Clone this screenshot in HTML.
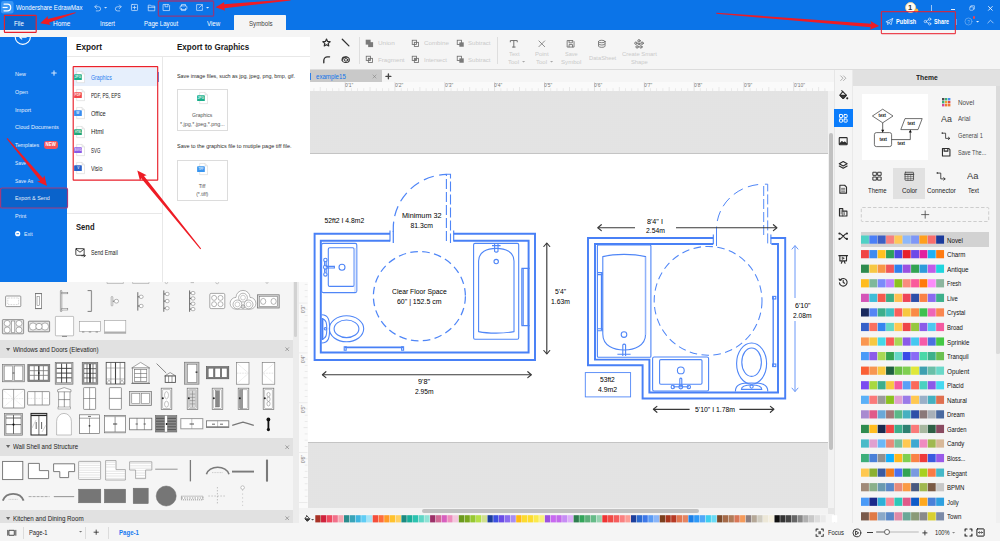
<!DOCTYPE html>
<html lang="en"><head><meta charset="utf-8"><title>Wondershare EdrawMax</title><style>
html,body{margin:0;padding:0;}
body{width:1000px;height:541px;overflow:hidden;background:#f5f5f5;position:relative;font-family:"Liberation Sans",sans-serif;}
.r{position:absolute;display:block;overflow:visible;}
.t{position:absolute;display:block;white-space:nowrap;}
svg text{font-family:"Liberation Sans",sans-serif;}
</style></head>
<body>
<!-- p1_base -->
<div class="r" style="left:0px;top:0px;width:1000.00px;height:30.00px;background:#0b74e8;"></div>
<div class="r" style="left:308px;top:69px;width:692.00px;height:1.00px;background:#dcdcdc;"></div>
<div class="r" style="left:234.4px;top:15.4px;width:52.00px;height:14.60px;background:#f5f5f5;border-radius:0.8px 0.8px 0 0;"></div>
<div class="r" style="left:308px;top:70px;width:74.00px;height:12.00px;background:#c9c9c9;"></div>
<div class="r" style="left:310px;top:72.5px;width:1.00px;height:7.50px;background:#2f7fe6;"></div>
<div class="r" style="left:299px;top:82px;width:534.70px;height:9.00px;background:#fafafa;"></div>
<div class="r" style="left:307.5px;top:91px;width:520.10px;height:416.70px;background:#e6e6e6;background-image:radial-gradient(#dadada 0.5px, transparent 0.75px);background-size:2px 2px;"></div>
<div class="r" style="left:307.5px;top:153.2px;width:520.10px;height:289.40px;background:#fff;border-top:0.8px solid #c4c4c4;border-bottom:0.8px solid #c4c4c4;box-sizing:border-box;"></div>
<div class="r" style="left:299px;top:91px;width:8.50px;height:416.70px;background:#fafafa;"></div>
<div class="r" style="left:293px;top:282px;width:6.00px;height:241.00px;background:#ececec;"></div>
<div class="r" style="left:293.6px;top:282px;width:3.80px;height:54.50px;background:#d2d2d2;border-radius:0 0 2px 2px;"></div>
<div class="r" style="left:827.6px;top:91px;width:6.30px;height:423.00px;background:#f2f2f2;"></div>
<div class="r" style="left:828.6px;top:132.5px;width:4.40px;height:317.70px;background:#c1c1c1;border-radius:2.2px;"></div>
<div class="r" style="left:827.6px;top:507.7px;width:6.30px;height:6.60px;background:#e6e6e6;"></div>
<div class="r" style="left:299px;top:507.7px;width:528.60px;height:6.60px;background:#f3f3f3;"></div>
<div class="r" style="left:421.9px;top:508.6px;width:277.10px;height:4.80px;background:#c1c1c1;border-radius:2.4px;"></div>
<div class="r" style="left:299px;top:514.3px;width:534.90px;height:8.70px;background:#f5f5f5;"></div>
<div class="r" style="left:834.3px;top:69.5px;width:18.40px;height:453.50px;background:#f5f5f5;border-left:0.8px solid #e6e6e6;border-right:0.8px solid #e9e9e9;box-sizing:border-box;"></div>
<div class="r" style="left:852.7px;top:69.5px;width:147.30px;height:453.50px;background:#f5f5f5;"></div>
<div class="r" style="left:852.7px;top:69.5px;width:147.30px;height:16.70px;background:#e1e1e1;"></div>
<div class="r" style="left:996.2px;top:86.2px;width:3.80px;height:436.80px;background:#f0f0f0;"></div>
<div class="r" style="left:996.2px;top:86.2px;width:3.80px;height:268.20px;background:#dbdbdb;border-radius:0 0 1.6px 1.6px;"></div>
<div class="r" style="left:0px;top:523px;width:1000.00px;height:18.00px;background:#f5f5f5;"></div>
<!-- p2_top -->
<svg class="r" style="left:0.8px;top:0.8px" width="12.6" height="12.6" viewBox="0 0 12.6 12.6"><rect x="0" y="0" width="12.6" height="12.6" rx="2.4" fill="#3a97f6"/><path d="M2.6 3.2H6.4A3.3 3.3 0 0 1 6.4 9.8H2.6" fill="none" stroke="#fff" stroke-width="1.2"/><path d="M1.6 6.5H6.6" stroke="#fff" stroke-width="1.2"/></svg>
<span class="t" style="left:15.50px;top:3.64px;font-size:6.4px;line-height:8.32px;color:#fff;transform:scaleX(0.946);transform-origin:left center;">Wondershare EdrawMax</span>
<svg class="r" style="left:93.10px;top:3.10px;" width="9" height="9" viewBox="0 0 10 10" fill="none" stroke="#cfe3fb" stroke-width="0.8" stroke-linecap="round" stroke-linejoin="round"><path d="M2.2 4.2H6.2A2.3 2.3 0 0 1 6.2 8.8H3.6"/><path d="M4 2.2L2 4.2L4 6.2"/></svg>
<svg class="r" style="left:103.70px;top:7.20px" width="3.2" height="1.6" viewBox="0 0 4 2"><path d="M0 0H4L2 2Z" fill="#cfe3fb"/></svg>
<svg class="r" style="left:114.30px;top:3.10px;" width="9" height="9" viewBox="0 0 10 10" fill="none" stroke="#cfe3fb" stroke-width="0.8" stroke-linecap="round" stroke-linejoin="round"><path d="M7.8 4.2H3.8A2.3 2.3 0 0 0 3.8 8.8H6.4"/><path d="M6 2.2L8 4.2L6 6.2"/></svg>
<svg class="r" style="left:130.10px;top:3.10px;" width="9" height="9" viewBox="0 0 10 10" fill="none" stroke="#d6e7fc" stroke-width="0.8" stroke-linecap="round" stroke-linejoin="round"><rect x="1.6" y="1.6" width="6.8" height="6.8" rx="0.8"/><path d="M5 3.4V6.6M3.4 5H6.6"/></svg>
<svg class="r" style="left:146.50px;top:3.10px;" width="9" height="9" viewBox="0 0 10 10" fill="none" stroke="#d6e7fc" stroke-width="0.8" stroke-linecap="round" stroke-linejoin="round"><path d="M1.4 8.2V2.4H4L4.8 3.4H8.6V8.2Z"/><path d="M1.4 4.8H8.6"/></svg>
<svg class="r" style="left:162.40px;top:3.10px;" width="9" height="9" viewBox="0 0 10 10" fill="none" stroke="#d6e7fc" stroke-width="0.8" stroke-linecap="round" stroke-linejoin="round"><path d="M1.6 1.6H7.4L8.4 2.6V8.4H1.6Z"/><path d="M3.4 1.8V4.2H6.6V1.8"/></svg>
<svg class="r" style="left:178.90px;top:3.10px;" width="9" height="9" viewBox="0 0 10 10" fill="none" stroke="#d6e7fc" stroke-width="0.8" stroke-linecap="round" stroke-linejoin="round"><rect x="1.2" y="3.2" width="7.6" height="4" rx="1.2"/><path d="M2.8 3V1.6H7.2V3M2.8 6V8.4H7.2V6"/></svg>
<svg class="r" style="left:194.80px;top:3.10px;" width="9" height="9" viewBox="0 0 10 10" fill="none" stroke="#d6e7fc" stroke-width="0.8" stroke-linecap="round" stroke-linejoin="round"><path d="M5 1.8H1.8V8.2H8.2V5.4"/><path d="M4.4 5.6L8 2M5.8 1.8H8.2V4.2"/></svg>
<svg class="r" style="left:205.60px;top:7.20px" width="3.2" height="1.6" viewBox="0 0 4 2"><path d="M0 0H4L2 2Z" fill="#e6f0fd"/></svg>
<div class="r" style="left:4.6px;top:15.4px;width:31.80px;height:14.60px;background:#0a64cc;"></div>
<span class="t" style="left:13.90px;top:20.18px;font-size:6.8px;line-height:8.84px;color:#fff;transform:scaleX(0.903);transform-origin:left center;">File</span>
<span class="t" style="left:53.10px;top:20.18px;font-size:6.8px;line-height:8.84px;color:#fff;transform:scaleX(0.954);transform-origin:left center;">Home</span>
<span class="t" style="left:100.00px;top:20.18px;font-size:6.8px;line-height:8.84px;color:#fff;transform:scaleX(0.870);transform-origin:left center;">Insert</span>
<span class="t" style="left:143.50px;top:20.18px;font-size:6.8px;line-height:8.84px;color:#fff;transform:scaleX(0.893);transform-origin:left center;">Page Layout</span>
<span class="t" style="left:206.80px;top:20.18px;font-size:6.8px;line-height:8.84px;color:#fff;transform:scaleX(0.903);transform-origin:left center;">View</span>
<span class="t" style="left:248.90px;top:20.18px;font-size:6.8px;line-height:8.84px;color:#444;transform:scaleX(0.905);transform-origin:left center;">Symbols</span>
<svg class="r" style="left:904px;top:1px" width="16" height="14" viewBox="0 0 16 14"><circle cx="6.6" cy="6.5" r="5" fill="#fffdf6" stroke="#f5d58e" stroke-width="0.9"/><circle cx="12.4" cy="9.4" r="1.9" fill="#f7b53c"/></svg>
<span class="t" style="left:908.38px;top:2.90px;font-size:8px;line-height:10.4px;color:#333;transform:scaleX(0.950);transform-origin:center center;font-weight:bold;">1</span>
<div class="r" style="left:931.4px;top:4.6px;width:0.80px;height:6.00px;background:#9cc6f6;"></div>
<div class="r" style="left:950.6px;top:8.6px;width:4.00px;height:0.90px;background:#e6f0fd;"></div>
<svg class="r" style="left:968.20px;top:3.80px;" width="8" height="8" viewBox="0 0 10 10" fill="none" stroke="#d6e7fc" stroke-width="0.8" stroke-linecap="round" stroke-linejoin="round"><rect x="2.2" y="3.6" width="4.4" height="4.2" rx="0.6"/><path d="M3.6 3.4V2.2H8V6.4H6.8"/></svg>
<svg class="r" style="left:986.60px;top:4.50px;" width="6.8" height="6.8" viewBox="0 0 10 10" fill="none" stroke="#eef5fe" stroke-width="1.3" stroke-linecap="round" stroke-linejoin="round"><path d="M2.2 2.2L7.8 7.8M7.8 2.2L2.2 7.8"/></svg>
<svg class="r" style="left:884.90px;top:16.80px;" width="9" height="9" viewBox="0 0 10 10" fill="none" stroke="#d6e7fc" stroke-width="0.8" stroke-linecap="round" stroke-linejoin="round"><path d="M1.4 5.2L8.6 1.6L6.8 8.6L4.8 6.4Z"/><path d="M4.8 6.4L8.6 1.6M3 5.8V8.6L4.6 7"/></svg>
<span class="t" style="left:896.00px;top:17.71px;font-size:6.6px;line-height:8.58px;color:#fff;transform:scaleX(0.847);transform-origin:left center;font-weight:bold;">Publish</span>
<svg class="r" style="left:922.50px;top:16.80px;" width="9" height="9" viewBox="0 0 10 10" fill="none" stroke="#d6e7fc" stroke-width="0.8" stroke-linecap="round" stroke-linejoin="round"><circle cx="2.6" cy="5" r="1.3"/><circle cx="7.4" cy="2.4" r="1.3"/><circle cx="7.4" cy="7.6" r="1.3"/><path d="M3.8 4.4L6.2 3M3.8 5.6L6.2 7"/></svg>
<span class="t" style="left:933.60px;top:17.71px;font-size:6.6px;line-height:8.58px;color:#fff;transform:scaleX(0.818);transform-origin:left center;font-weight:bold;">Share</span>
<div class="r" style="left:956.2px;top:19.4px;width:0.80px;height:5.80px;background:#5ea3f1;"></div>
<svg class="r" style="left:964.10px;top:17.00px;" width="9" height="9" viewBox="0 0 10 10" fill="none" stroke="#7fb5f3" stroke-width="0.7" stroke-linecap="round" stroke-linejoin="round"><circle cx="5" cy="5" r="3.9"/></svg>
<span class="t" style="left:967.10px;top:18.69px;font-size:5.4px;line-height:7.02px;color:#7fb5f3;transform:scaleX(0.860);transform-origin:center center;">?</span>
<div class="r" style="left:972.6px;top:16.4px;width:2.6px;height:2.6px;border-radius:50%;background:#f0444f"></div>
<svg class="r" style="left:976.10px;top:20.80px" width="3.2" height="1.6" viewBox="0 0 4 2"><path d="M0 0H4L2 2Z" fill="#e6f0fd"/></svg>
<svg class="r" style="left:985.70px;top:16.90px;" width="9" height="9" viewBox="0 0 10 10" fill="none" stroke="#cfe3fb" stroke-width="0.8" stroke-linecap="round" stroke-linejoin="round"><path d="M2 6.6L5 3.6L8 6.6"/></svg>
<svg class="r" style="left:321.90px;top:38.10px;" width="9" height="9" viewBox="0 0 10 10" fill="none" stroke="#303030" stroke-width="1.35" stroke-linecap="round" stroke-linejoin="round"><path d="M5 1.2L6.2 3.8L9 4.1L6.9 6L7.5 8.8L5 7.4L2.5 8.8L3.1 6L1 4.1L3.8 3.8Z"/></svg>
<svg class="r" style="left:341.20px;top:38.40px;" width="9.2" height="9.2" viewBox="0 0 10 10" fill="none" stroke="#303030" stroke-width="1.4" stroke-linecap="round" stroke-linejoin="round"><path d="M1.4 1.4L8.6 8.6"/></svg>
<svg class="r" style="left:321.90px;top:55.10px;" width="9" height="9" viewBox="0 0 10 10" fill="none" stroke="#303030" stroke-width="1.5" stroke-linecap="round" stroke-linejoin="round"><path d="M2 8.6V6A4 4 0 0 1 6 2H8.4"/></svg>
<svg class="r" style="left:340.90px;top:54.90px;" width="9.4" height="9.4" viewBox="0 0 10 10" fill="none" stroke="#303030" stroke-width="1.0" stroke-linecap="round" stroke-linejoin="round"><ellipse cx="5" cy="5" rx="3.9" ry="3" stroke-width="1.1"/><ellipse cx="5.3" cy="5.2" rx="2" ry="1.4" stroke-width="1.0"/><path d="M1.2 5.6Q1.6 2.2 5.6 2" stroke-width="1.0"/></svg>
<div class="r" style="left:359.2px;top:37px;width:0.80px;height:26.60px;background:#dedede;"></div>
<svg class="r" style="left:365.20px;top:38.60px;stroke-linejoin:miter;" width="8.8" height="8.8" viewBox="0 0 10 10" fill="none" stroke="#6e6e6e" stroke-width="0.95" stroke-linecap="round" stroke-linejoin="round"><rect x="0.8" y="0.8" width="5.6" height="5.6" fill="#7a7a7a" stroke="none"/><rect x="3.6" y="3.6" width="5.6" height="5.6" fill="#7a7a7a" stroke="none"/></svg>
<span class="t" style="left:378.00px;top:39.14px;font-size:6.1px;line-height:7.93px;color:#cacaca;transform:scaleX(1.048);transform-origin:left center;">Union</span>
<svg class="r" style="left:365.20px;top:55.20px;stroke-linejoin:miter;" width="8.8" height="8.8" viewBox="0 0 10 10" fill="none" stroke="#6e6e6e" stroke-width="0.95" stroke-linecap="round" stroke-linejoin="round"><rect x="1.4" y="1.4" width="4.8" height="4.8"/><rect x="3.8" y="3.8" width="4.8" height="4.8"/><path d="M3.8 6.2L6.2 3.8"/></svg>
<span class="t" style="left:378.00px;top:55.94px;font-size:6.1px;line-height:7.93px;color:#cacaca;transform:scaleX(1.019);transform-origin:left center;">Fragment</span>
<svg class="r" style="left:410.80px;top:38.60px;stroke-linejoin:miter;" width="8.8" height="8.8" viewBox="0 0 10 10" fill="none" stroke="#6e6e6e" stroke-width="0.95" stroke-linecap="round" stroke-linejoin="round"><rect x="1.4" y="1.4" width="4.8" height="4.8"/><rect x="3.8" y="3.8" width="4.8" height="4.8"/></svg>
<span class="t" style="left:424.00px;top:39.14px;font-size:6.1px;line-height:7.93px;color:#cacaca;transform:scaleX(1.020);transform-origin:left center;">Combine</span>
<svg class="r" style="left:410.80px;top:55.20px;stroke-linejoin:miter;" width="8.8" height="8.8" viewBox="0 0 10 10" fill="none" stroke="#6e6e6e" stroke-width="0.95" stroke-linecap="round" stroke-linejoin="round"><rect x="1.4" y="1.4" width="4.8" height="4.8"/><rect x="3.8" y="3.8" width="4.8" height="4.8"/><rect x="3.8" y="3.8" width="2.4" height="2.4" fill="#7a7a7a" stroke="none"/></svg>
<span class="t" style="left:424.00px;top:55.94px;font-size:6.1px;line-height:7.93px;color:#cacaca;transform:scaleX(0.975);transform-origin:left center;">Intersect</span>
<svg class="r" style="left:455.80px;top:38.60px;stroke-linejoin:miter;" width="8.8" height="8.8" viewBox="0 0 10 10" fill="none" stroke="#6e6e6e" stroke-width="0.95" stroke-linecap="round" stroke-linejoin="round"><rect x="1.4" y="1.4" width="4.8" height="4.8"/><rect x="3.8" y="3.8" width="5" height="5" fill="#7a7a7a" stroke="none"/></svg>
<span class="t" style="left:468.00px;top:39.14px;font-size:6.1px;line-height:7.93px;color:#cacaca;transform:scaleX(0.990);transform-origin:left center;">Subtract</span>
<svg class="r" style="left:455.80px;top:55.20px;stroke-linejoin:miter;" width="8.8" height="8.8" viewBox="0 0 10 10" fill="none" stroke="#6e6e6e" stroke-width="0.95" stroke-linecap="round" stroke-linejoin="round"><rect x="1.4" y="1.4" width="4.8" height="4.8"/><rect x="3.8" y="3.8" width="5" height="5" fill="#7a7a7a" stroke="none"/></svg>
<span class="t" style="left:468.00px;top:55.94px;font-size:6.1px;line-height:7.93px;color:#cacaca;transform:scaleX(0.990);transform-origin:left center;">Subtract</span>
<div class="r" style="left:497.2px;top:37px;width:0.80px;height:26.60px;background:#dedede;"></div>
<svg class="r" style="left:508.80px;top:39.20px;" width="9.6" height="9.6" viewBox="0 0 10 10" fill="none" stroke="#6e6e6e" stroke-width="1.0" stroke-linecap="round" stroke-linejoin="round"><path d="M1.4 3V1.6H8.6V3M5 1.6V8.4M3.6 8.4H6.4"/></svg>
<span class="t" style="left:509.00px;top:50.33px;font-size:6.1px;line-height:7.93px;color:#cacaca;transform:scaleX(0.948);transform-origin:left center;">Text</span>
<span class="t" style="left:508.40px;top:58.14px;font-size:6.1px;line-height:7.93px;color:#cacaca;transform:scaleX(0.983);transform-origin:left center;">Tool</span>
<svg class="r" style="left:521.80px;top:61.00px" width="3.2" height="1.6" viewBox="0 0 4 2"><path d="M0 0H4L2 2Z" fill="#a8a8a8"/></svg>
<svg class="r" style="left:536.80px;top:39.40px;" width="9.6" height="9.6" viewBox="0 0 10 10" fill="none" stroke="#6e6e6e" stroke-width="0.8" stroke-linecap="round" stroke-linejoin="round"><path d="M2 2L8 8M8 2L2 8"/></svg>
<span class="t" style="left:535.00px;top:50.33px;font-size:6.1px;line-height:7.93px;color:#cacaca;transform:scaleX(0.978);transform-origin:left center;">Point</span>
<span class="t" style="left:536.20px;top:58.14px;font-size:6.1px;line-height:7.93px;color:#cacaca;transform:scaleX(0.983);transform-origin:left center;">Tool</span>
<svg class="r" style="left:550.40px;top:61.00px" width="3.2" height="1.6" viewBox="0 0 4 2"><path d="M0 0H4L2 2Z" fill="#a8a8a8"/></svg>
<svg class="r" style="left:566.00px;top:39.20px;" width="9.6" height="9.6" viewBox="0 0 10 10" fill="none" stroke="#6e6e6e" stroke-width="0.9" stroke-linecap="round" stroke-linejoin="round"><path d="M1.6 1.6H7.2L8.4 2.8V8.4H1.6Z"/><path d="M3.2 1.8V4H6.6V1.8M3.2 8.2V5.8H6.8V8.2"/></svg>
<span class="t" style="left:564.80px;top:50.33px;font-size:6.1px;line-height:7.93px;color:#cacaca;transform:scaleX(0.906);transform-origin:left center;">Save</span>
<span class="t" style="left:560.80px;top:58.14px;font-size:6.1px;line-height:7.93px;color:#cacaca;transform:scaleX(1.003);transform-origin:left center;">Symbol</span>
<svg class="r" style="left:597.40px;top:39.20px;" width="9.6" height="9.6" viewBox="0 0 10 10" fill="none" stroke="#6e6e6e" stroke-width="0.9" stroke-linecap="round" stroke-linejoin="round"><ellipse cx="5" cy="2.6" rx="3.4" ry="1.3"/><path d="M1.6 2.6V7.4A3.4 1.3 0 0 0 8.4 7.4V2.6M1.6 5A3.4 1.3 0 0 0 8.4 5"/></svg>
<span class="t" style="left:589.40px;top:53.53px;font-size:6.1px;line-height:7.93px;color:#cacaca;transform:scaleX(0.944);transform-origin:left center;">DataSheet</span>
<svg class="r" style="left:634.40px;top:39.00px;" width="10" height="10" viewBox="0 0 10 10" fill="none" stroke="#666" stroke-width="0.9" stroke-linecap="round" stroke-linejoin="round"><circle cx="5" cy="1.8" r="1.2"/><circle cx="1.9" cy="4.2" r="1.2"/><circle cx="8.1" cy="4.2" r="1.2"/><circle cx="3.1" cy="7.9" r="1.2"/><circle cx="6.9" cy="7.9" r="1.2"/><circle cx="5" cy="5" r="0.9"/></svg>
<span class="t" style="left:622.20px;top:50.33px;font-size:6.1px;line-height:7.93px;color:#cacaca;transform:scaleX(0.965);transform-origin:left center;">Create Smart</span>
<span class="t" style="left:631.40px;top:58.14px;font-size:6.1px;line-height:7.93px;color:#cacaca;transform:scaleX(0.952);transform-origin:left center;">Shape</span>
<span class="t" style="left:316.00px;top:72.91px;font-size:6.6px;line-height:8.58px;color:#0f73ea;transform:scaleX(0.923);transform-origin:left center;">example15</span>
<svg class="r" style="left:371.10px;top:73.10px;" width="7" height="7" viewBox="0 0 10 10" fill="none" stroke="#777" stroke-width="0.7" stroke-linecap="round" stroke-linejoin="round"><path d="M2.8 2.8L7.2 7.2M7.2 2.8L2.8 7.2"/></svg>
<svg class="r" style="left:384.60px;top:72.90px;" width="6.8" height="6.8" viewBox="0 0 10 10" fill="none" stroke="#444" stroke-width="2.0" stroke-linecap="round" stroke-linejoin="round"><path d="M5 1.4V8.6M1.4 5H8.6"/></svg>
<svg class="r" style="left:0;top:0" width="1000" height="541" viewBox="0 0 1000 541"><rect x="313.54" y="88.2" width="0.8" height="2.8" fill="#e6e6e6"/><rect x="319.78" y="87" width="0.8" height="4" fill="#e2e2e2"/><rect x="326.01" y="88.2" width="0.8" height="2.8" fill="#e6e6e6"/><rect x="332.24" y="88.2" width="0.8" height="2.8" fill="#e6e6e6"/><rect x="338.47" y="88.2" width="0.8" height="2.8" fill="#e6e6e6"/><rect x="344.70" y="82" width="0.8" height="9" fill="#dcdcdc"/><rect x="350.93" y="88.2" width="0.8" height="2.8" fill="#e6e6e6"/><rect x="357.16" y="88.2" width="0.8" height="2.8" fill="#e6e6e6"/><rect x="363.39" y="88.2" width="0.8" height="2.8" fill="#e6e6e6"/><rect x="369.62" y="87" width="0.8" height="4" fill="#e2e2e2"/><rect x="375.86" y="88.2" width="0.8" height="2.8" fill="#e6e6e6"/><rect x="382.09" y="88.2" width="0.8" height="2.8" fill="#e6e6e6"/><rect x="388.32" y="88.2" width="0.8" height="2.8" fill="#e6e6e6"/><rect x="394.55" y="82" width="0.8" height="9" fill="#dcdcdc"/><rect x="400.78" y="88.2" width="0.8" height="2.8" fill="#e6e6e6"/><rect x="407.01" y="88.2" width="0.8" height="2.8" fill="#e6e6e6"/><rect x="413.24" y="88.2" width="0.8" height="2.8" fill="#e6e6e6"/><rect x="419.48" y="87" width="0.8" height="4" fill="#e2e2e2"/><rect x="425.71" y="88.2" width="0.8" height="2.8" fill="#e6e6e6"/><rect x="431.94" y="88.2" width="0.8" height="2.8" fill="#e6e6e6"/><rect x="438.17" y="88.2" width="0.8" height="2.8" fill="#e6e6e6"/><rect x="444.40" y="82" width="0.8" height="9" fill="#dcdcdc"/><rect x="450.63" y="88.2" width="0.8" height="2.8" fill="#e6e6e6"/><rect x="456.86" y="88.2" width="0.8" height="2.8" fill="#e6e6e6"/><rect x="463.09" y="88.2" width="0.8" height="2.8" fill="#e6e6e6"/><rect x="469.33" y="87" width="0.8" height="4" fill="#e2e2e2"/><rect x="475.56" y="88.2" width="0.8" height="2.8" fill="#e6e6e6"/><rect x="481.79" y="88.2" width="0.8" height="2.8" fill="#e6e6e6"/><rect x="488.02" y="88.2" width="0.8" height="2.8" fill="#e6e6e6"/><rect x="494.25" y="82" width="0.8" height="9" fill="#dcdcdc"/><rect x="500.48" y="88.2" width="0.8" height="2.8" fill="#e6e6e6"/><rect x="506.71" y="88.2" width="0.8" height="2.8" fill="#e6e6e6"/><rect x="512.94" y="88.2" width="0.8" height="2.8" fill="#e6e6e6"/><rect x="519.18" y="87" width="0.8" height="4" fill="#e2e2e2"/><rect x="525.41" y="88.2" width="0.8" height="2.8" fill="#e6e6e6"/><rect x="531.64" y="88.2" width="0.8" height="2.8" fill="#e6e6e6"/><rect x="537.87" y="88.2" width="0.8" height="2.8" fill="#e6e6e6"/><rect x="544.10" y="82" width="0.8" height="9" fill="#dcdcdc"/><rect x="550.33" y="88.2" width="0.8" height="2.8" fill="#e6e6e6"/><rect x="556.56" y="88.2" width="0.8" height="2.8" fill="#e6e6e6"/><rect x="562.79" y="88.2" width="0.8" height="2.8" fill="#e6e6e6"/><rect x="569.02" y="87" width="0.8" height="4" fill="#e2e2e2"/><rect x="575.26" y="88.2" width="0.8" height="2.8" fill="#e6e6e6"/><rect x="581.49" y="88.2" width="0.8" height="2.8" fill="#e6e6e6"/><rect x="587.72" y="88.2" width="0.8" height="2.8" fill="#e6e6e6"/><rect x="593.95" y="82" width="0.8" height="9" fill="#dcdcdc"/><rect x="600.18" y="88.2" width="0.8" height="2.8" fill="#e6e6e6"/><rect x="606.41" y="88.2" width="0.8" height="2.8" fill="#e6e6e6"/><rect x="612.64" y="88.2" width="0.8" height="2.8" fill="#e6e6e6"/><rect x="618.88" y="87" width="0.8" height="4" fill="#e2e2e2"/><rect x="625.11" y="88.2" width="0.8" height="2.8" fill="#e6e6e6"/><rect x="631.34" y="88.2" width="0.8" height="2.8" fill="#e6e6e6"/><rect x="637.57" y="88.2" width="0.8" height="2.8" fill="#e6e6e6"/><rect x="643.80" y="82" width="0.8" height="9" fill="#dcdcdc"/><rect x="650.03" y="88.2" width="0.8" height="2.8" fill="#e6e6e6"/><rect x="656.26" y="88.2" width="0.8" height="2.8" fill="#e6e6e6"/><rect x="662.49" y="88.2" width="0.8" height="2.8" fill="#e6e6e6"/><rect x="668.73" y="87" width="0.8" height="4" fill="#e2e2e2"/><rect x="674.96" y="88.2" width="0.8" height="2.8" fill="#e6e6e6"/><rect x="681.19" y="88.2" width="0.8" height="2.8" fill="#e6e6e6"/><rect x="687.42" y="88.2" width="0.8" height="2.8" fill="#e6e6e6"/><rect x="693.65" y="82" width="0.8" height="9" fill="#dcdcdc"/><rect x="699.88" y="88.2" width="0.8" height="2.8" fill="#e6e6e6"/><rect x="706.11" y="88.2" width="0.8" height="2.8" fill="#e6e6e6"/><rect x="712.34" y="88.2" width="0.8" height="2.8" fill="#e6e6e6"/><rect x="718.58" y="87" width="0.8" height="4" fill="#e2e2e2"/><rect x="724.81" y="88.2" width="0.8" height="2.8" fill="#e6e6e6"/><rect x="731.04" y="88.2" width="0.8" height="2.8" fill="#e6e6e6"/><rect x="737.27" y="88.2" width="0.8" height="2.8" fill="#e6e6e6"/><rect x="743.50" y="82" width="0.8" height="9" fill="#dcdcdc"/><rect x="749.73" y="88.2" width="0.8" height="2.8" fill="#e6e6e6"/><rect x="755.96" y="88.2" width="0.8" height="2.8" fill="#e6e6e6"/><rect x="762.19" y="88.2" width="0.8" height="2.8" fill="#e6e6e6"/><rect x="768.43" y="87" width="0.8" height="4" fill="#e2e2e2"/><rect x="774.66" y="88.2" width="0.8" height="2.8" fill="#e6e6e6"/><rect x="780.89" y="88.2" width="0.8" height="2.8" fill="#e6e6e6"/><rect x="787.12" y="88.2" width="0.8" height="2.8" fill="#e6e6e6"/><rect x="793.35" y="82" width="0.8" height="9" fill="#dcdcdc"/><rect x="799.58" y="88.2" width="0.8" height="2.8" fill="#e6e6e6"/><rect x="805.81" y="88.2" width="0.8" height="2.8" fill="#e6e6e6"/><rect x="812.04" y="88.2" width="0.8" height="2.8" fill="#e6e6e6"/><rect x="818.28" y="87" width="0.8" height="4" fill="#e2e2e2"/><rect x="824.51" y="88.2" width="0.8" height="2.8" fill="#e6e6e6"/><rect x="304.7" y="283.96" width="2.8" height="0.8" fill="#e6e6e6"/><rect x="304.7" y="290.19" width="2.8" height="0.8" fill="#e6e6e6"/><rect x="304.7" y="296.42" width="2.8" height="0.8" fill="#e6e6e6"/><rect x="299" y="302.65" width="8.5" height="0.8" fill="#e8e8e8"/><rect x="304.7" y="308.88" width="2.8" height="0.8" fill="#e6e6e6"/><rect x="304.7" y="315.11" width="2.8" height="0.8" fill="#e6e6e6"/><rect x="304.7" y="321.34" width="2.8" height="0.8" fill="#e6e6e6"/><rect x="303.5" y="327.58" width="4" height="0.8" fill="#e2e2e2"/><rect x="304.7" y="333.81" width="2.8" height="0.8" fill="#e6e6e6"/><rect x="304.7" y="340.04" width="2.8" height="0.8" fill="#e6e6e6"/><rect x="304.7" y="346.27" width="2.8" height="0.8" fill="#e6e6e6"/><rect x="299" y="352.50" width="8.5" height="0.8" fill="#e8e8e8"/><rect x="304.7" y="358.73" width="2.8" height="0.8" fill="#e6e6e6"/><rect x="304.7" y="364.96" width="2.8" height="0.8" fill="#e6e6e6"/><rect x="304.7" y="371.19" width="2.8" height="0.8" fill="#e6e6e6"/><rect x="303.5" y="377.43" width="4" height="0.8" fill="#e2e2e2"/><rect x="304.7" y="383.66" width="2.8" height="0.8" fill="#e6e6e6"/><rect x="304.7" y="389.89" width="2.8" height="0.8" fill="#e6e6e6"/><rect x="304.7" y="396.12" width="2.8" height="0.8" fill="#e6e6e6"/><rect x="299" y="402.35" width="8.5" height="0.8" fill="#e8e8e8"/><rect x="304.7" y="408.58" width="2.8" height="0.8" fill="#e6e6e6"/><rect x="304.7" y="414.81" width="2.8" height="0.8" fill="#e6e6e6"/><rect x="304.7" y="421.04" width="2.8" height="0.8" fill="#e6e6e6"/><rect x="303.5" y="427.28" width="4" height="0.8" fill="#e2e2e2"/><rect x="304.7" y="433.51" width="2.8" height="0.8" fill="#e6e6e6"/><rect x="304.7" y="439.74" width="2.8" height="0.8" fill="#e6e6e6"/><rect x="304.7" y="445.97" width="2.8" height="0.8" fill="#e6e6e6"/><rect x="299" y="452.20" width="8.5" height="0.8" fill="#e8e8e8"/><rect x="304.7" y="458.43" width="2.8" height="0.8" fill="#e6e6e6"/><rect x="304.7" y="464.66" width="2.8" height="0.8" fill="#e6e6e6"/><rect x="304.7" y="470.89" width="2.8" height="0.8" fill="#e6e6e6"/><rect x="303.5" y="477.13" width="4" height="0.8" fill="#e2e2e2"/><rect x="304.7" y="483.36" width="2.8" height="0.8" fill="#e6e6e6"/><rect x="304.7" y="489.59" width="2.8" height="0.8" fill="#e6e6e6"/><rect x="304.7" y="495.82" width="2.8" height="0.8" fill="#e6e6e6"/><rect x="299" y="502.05" width="8.5" height="0.8" fill="#e8e8e8"/></svg>
<span class="t" style="left:344.90px;top:82.42px;font-size:5.2px;line-height:6.76px;color:#777;transform:scaleX(0.950);transform-origin:left center;">0'1"</span>
<span class="t" style="left:394.75px;top:82.42px;font-size:5.2px;line-height:6.76px;color:#777;transform:scaleX(0.950);transform-origin:left center;">0'2"</span>
<span class="t" style="left:444.60px;top:82.42px;font-size:5.2px;line-height:6.76px;color:#777;transform:scaleX(0.950);transform-origin:left center;">0'3"</span>
<span class="t" style="left:494.45px;top:82.42px;font-size:5.2px;line-height:6.76px;color:#777;transform:scaleX(0.950);transform-origin:left center;">0'4"</span>
<span class="t" style="left:544.30px;top:82.42px;font-size:5.2px;line-height:6.76px;color:#777;transform:scaleX(0.950);transform-origin:left center;">0'5"</span>
<span class="t" style="left:594.15px;top:82.42px;font-size:5.2px;line-height:6.76px;color:#777;transform:scaleX(0.950);transform-origin:left center;">0'6"</span>
<span class="t" style="left:644.00px;top:82.42px;font-size:5.2px;line-height:6.76px;color:#777;transform:scaleX(0.950);transform-origin:left center;">0'7"</span>
<span class="t" style="left:693.85px;top:82.42px;font-size:5.2px;line-height:6.76px;color:#777;transform:scaleX(0.950);transform-origin:left center;">0'8"</span>
<span class="t" style="left:743.70px;top:82.42px;font-size:5.2px;line-height:6.76px;color:#777;transform:scaleX(0.950);transform-origin:left center;">0'9"</span>
<span class="t" style="left:793.55px;top:82.42px;font-size:5.2px;line-height:6.76px;color:#777;transform:scaleX(0.950);transform-origin:left center;">0'10"</span>
<span class="t" style="left:292.60px;top:306.45px;width:20px;height:6px;line-height:6px;text-align:center;font-size:5.2px;color:#777;transform:rotate(-90deg);">0'3"</span>
<span class="t" style="left:292.60px;top:356.30px;width:20px;height:6px;line-height:6px;text-align:center;font-size:5.2px;color:#777;transform:rotate(-90deg);">0'4"</span>
<span class="t" style="left:292.60px;top:406.15px;width:20px;height:6px;line-height:6px;text-align:center;font-size:5.2px;color:#777;transform:rotate(-90deg);">0'5"</span>
<span class="t" style="left:292.60px;top:456.00px;width:20px;height:6px;line-height:6px;text-align:center;font-size:5.2px;color:#777;transform:rotate(-90deg);">0'6"</span>
<!-- p3_plan -->
<svg class="r" style="left:0px;top:0px;" width="1000" height="541" viewBox="0 0 1000 541"><path fill="none" stroke="#4880f6" stroke-width="1.95" stroke-linejoin="miter" d="M390 233.7H314.6V359.9H535V233.7H453.7"/><path fill="none" stroke="#4880f6" stroke-width="1.95" stroke-linejoin="miter" d="M390 240.7H320.8V352.5H528.6V240.7H453.7"/><path fill="none" stroke="#4880f6" stroke-width="1.1" d="M390 230.6V241.4M453.7 230.6V241.4"/><path fill="none" stroke="#4f86f7" stroke-width="1.25" d="M393.3 243V231"/><path fill="none" stroke="#4f86f7" stroke-width="1.25" stroke-dasharray="10.5 5.5" d="M393.3 232V228A55 53.6 0 0 1 446.3 174.4"/><path fill="none" stroke="#4f86f7" stroke-width="1.1" stroke-dasharray="10 3" d="M446.4 241V174.3H450.5V243"/><rect fill="none" stroke="#4f86f7" stroke-width="1.1" x="321.6" y="243.4" width="35.2" height="49.2" rx="1.6"/><rect fill="none" stroke="#4f86f7" stroke-width="1.1" x="328.3" y="247.8" width="25.8" height="38.6" rx="1.4"/><rect x="354" y="248" width="2.6" height="44" fill="#b8cdfb" opacity="0.5"/><circle fill="none" stroke="#4f86f7" stroke-width="1.1" cx="342" cy="267.2" r="3"/><path fill="none" stroke="#4f86f7" stroke-width="1.1" d="M325.6 266.4H334.4V268H325.6"/><circle fill="none" stroke="#4f86f7" stroke-width="1.1" cx="325.4" cy="260" r="1.7" fill="#fff"/><circle fill="none" stroke="#4f86f7" stroke-width="1.1" cx="325.4" cy="267.2" r="1.9" fill="#fff"/><circle fill="none" stroke="#4f86f7" stroke-width="1.1" cx="325.4" cy="274.4" r="1.7" fill="#fff"/><path fill="none" stroke="#4f86f7" stroke-width="1.1" d="M324.6 261.6V265.4M326.2 261.6V265.4M324.6 269V272.8M326.2 269V272.8"/><ellipse fill="none" stroke="#4f86f7" stroke-width="1.1" cx="346.5" cy="328.8" rx="17.2" ry="13"/><ellipse fill="none" stroke="#4f86f7" stroke-width="1.1" cx="346.5" cy="328.8" rx="12.4" ry="8.8"/><path fill="none" stroke="#4f86f7" stroke-width="1.1" d="M321.6 314.8C329 314.8 329.6 321 329.6 328.8C329.6 337 329 343 321.6 343"/><path d="M322.6 318V340" stroke="#4880f6" stroke-width="1.6"/><path fill="none" stroke="#4f86f7" stroke-width="1.1" d="M321.6 319C326.6 319 326.8 324 326.8 328.8C326.8 334 326.6 338.8 321.6 338.8"/><circle fill="none" stroke="#4f86f7" stroke-width="1.1" cx="325.4" cy="328.8" r="1.2"/><ellipse fill="none" stroke="#4f86f7" stroke-width="1.25" stroke-dasharray="7.6 4.4" cx="419.4" cy="296.2" rx="46" ry="44.6"/><path fill="none" stroke="#4880f6" stroke-width="1.8" d="M344.6 347.3H403.4"/><rect fill="none" stroke="#4f86f7" stroke-width="1.1" x="344.2" y="346.8" width="2" height="3.4"/><rect fill="none" stroke="#4f86f7" stroke-width="1.1" x="401.6" y="346.8" width="2" height="3.4"/><rect fill="none" stroke="#4f86f7" stroke-width="1.1" x="473.6" y="243.4" width="45.1" height="95.8" rx="1.4"/><path fill="none" stroke="#4f86f7" stroke-width="1.1" d="M478.6 331.6V261C478.6 252 487 248.4 496.2 248.4C505.6 248.4 514 252 514 261V331.6C504 333.6 488 333.6 478.6 331.6Z"/><path fill="none" stroke="#4f86f7" stroke-width="1.1" d="M494.6 244V251.4C495.4 252.4 497.2 252.4 498 251.4V244M492 245.6H500.6"/><circle fill="none" stroke="#4f86f7" stroke-width="1.1" cx="496.2" cy="261.6" r="2.2"/><path fill="none" stroke="#4880f6" stroke-width="1.4" d="M528.4 268V326"/><path fill="none" stroke="#4f86f7" stroke-width="1.1" d="M521.4 268.4H529.6M521.4 325.6H529.6M521.8 268.4V325.6M523.2 268.4V325.6"/><path d="M546.8 243L546.8 354" stroke="#383838" stroke-width="1.15" fill="none"/><path d="M549.77 246.50L546.80 243.00L543.82 246.50" fill="none" stroke="#383838" stroke-width="1.15" stroke-linecap="round" stroke-linejoin="round"/><path d="M543.82 350.50L546.80 354.00L549.77 350.50" fill="none" stroke="#383838" stroke-width="1.15" stroke-linecap="round" stroke-linejoin="round"/><path d="M322.4 374.7L531.3 374.7" stroke="#383838" stroke-width="1.15" fill="none"/><path d="M325.90 371.72L322.40 374.70L325.90 377.68" fill="none" stroke="#383838" stroke-width="1.15" stroke-linecap="round" stroke-linejoin="round"/><path d="M527.80 377.68L531.30 374.70L527.80 371.72" fill="none" stroke="#383838" stroke-width="1.15" stroke-linecap="round" stroke-linejoin="round"/><path fill="none" stroke="#4880f6" stroke-width="1.95" stroke-linejoin="miter" d="M713.3 238H588V365.2H642.6V398.5H785.2V238H770.7"/><path fill="none" stroke="#4880f6" stroke-width="1.95" stroke-linejoin="miter" d="M713.3 243.9H595V359.6H649.4V392.4H778V243.9H771.4"/><path fill="none" stroke="#4880f6" stroke-width="1.1" d="M713.3 234.6V244M770.9 234.6V244"/><path fill="none" stroke="#4f86f7" stroke-width="1.0" d="M716.5 246V236"/><path fill="none" stroke="#4f86f7" stroke-width="1.0" stroke-dasharray="10.5 5.5" d="M716.5 237V229A47.3 45 0 0 1 763.6 184.2"/><path fill="none" stroke="#4f86f7" stroke-width="0.95" stroke-dasharray="10 3" d="M763.7 235V184.2H767.7V246"/><rect fill="none" stroke="#4f86f7" stroke-width="1.1" x="597.4" y="245" width="53.5" height="112.2" rx="1"/><path fill="none" stroke="#4f86f7" stroke-width="1.1" d="M602.8 256.6C615 253.6 633 253.6 645.6 256.6V334C645.6 346 634 350 624.2 350C614 350 602.8 346 602.8 334Z"/><rect x="644.4" y="257" width="1.8" height="78" fill="#b8cdfb" opacity="0.6"/><circle fill="none" stroke="#4f86f7" stroke-width="1.1" cx="624" cy="334.6" r="2.8"/><path fill="none" stroke="#4f86f7" stroke-width="1.1" d="M622.8 356V345C623.4 343.8 625 343.8 625.6 345V356M617.4 354.2H630.6"/><path fill="none" stroke="#4880f6" stroke-width="1.5" d="M601.6 273.2V330"/><path fill="none" stroke="#4f86f7" stroke-width="1.1" d="M597.8 272.6H602.2V274.6H597.8M597.8 328.8H602.2V330.8H597.8"/><ellipse fill="none" stroke="#4f86f7" stroke-width="1.05" stroke-dasharray="7.6 4.4" cx="708.1" cy="300.8" rx="53.9" ry="54.4"/><rect fill="none" stroke="#4f86f7" stroke-width="1.1" x="652.6" y="357" width="56" height="34" rx="1.6"/><rect fill="none" stroke="#4f86f7" stroke-width="1.1" x="659.6" y="359.6" width="42.4" height="24.6" rx="1.2"/><circle fill="none" stroke="#4f86f7" stroke-width="1.1" cx="680.8" cy="370.4" r="3.4"/><path fill="none" stroke="#4f86f7" stroke-width="1.1" d="M679.8 386.4V379C680.2 377.8 681.4 377.8 681.8 379V386.4"/><path fill="none" stroke="#4f86f7" stroke-width="1.1" d="M673 386.8H689"/><circle fill="none" stroke="#4f86f7" stroke-width="1.1" cx="672.8" cy="387" r="1.7" fill="#fff"/><circle fill="none" stroke="#4f86f7" stroke-width="1.1" cx="680.8" cy="387" r="1.9" fill="#fff"/><circle fill="none" stroke="#4f86f7" stroke-width="1.1" cx="688.8" cy="387" r="1.7" fill="#fff"/><ellipse fill="none" stroke="#4f86f7" stroke-width="1.1" cx="751.6" cy="363.6" rx="15" ry="20.6"/><ellipse fill="none" stroke="#4f86f7" stroke-width="1.1" cx="751.6" cy="362.2" rx="9.8" ry="14.2"/><path fill="none" stroke="#4f86f7" stroke-width="1.1" d="M735.4 391.4C735.4 384 741 383 751.6 383C762 383 767.8 384 767.8 391.4"/><path fill="none" stroke="#4f86f7" stroke-width="1.1" d="M741.4 389.4C741.4 385.6 746 385 751.6 385C757 385 761.8 385.6 761.8 389.4Z"/><circle fill="none" stroke="#4f86f7" stroke-width="1.1" cx="751.6" cy="386.6" r="1.6" fill="#fff"/><path fill="none" stroke="#4880f6" stroke-width="1.3" d="M773.2 296.8V366"/><rect fill="none" stroke="#4f86f7" stroke-width="1.1" x="772.6" y="296.4" width="3.2" height="2.6"/><rect fill="none" stroke="#4f86f7" stroke-width="1.1" x="772.6" y="364" width="3.2" height="2.6"/><rect fill="none" stroke="#4f86f7" stroke-width="0.9" x="585.3" y="372.6" width="45.3" height="24.3"/><path d="M597.8 227.7H635M676 227.7H776.9" stroke="#383838" stroke-width="1.15" fill="none"/><path d="M601.30 224.72L597.80 227.70L601.30 230.67" fill="none" stroke="#383838" stroke-width="1.15" stroke-linecap="round" stroke-linejoin="round"/><path d="M773.40 230.67L776.90 227.70L773.40 224.72" fill="none" stroke="#383838" stroke-width="1.15" stroke-linecap="round" stroke-linejoin="round"/><path d="M653.4 409.3H689.6M739.4 409.3H773.9" stroke="#383838" stroke-width="1.15" fill="none"/><path d="M656.90 406.32L653.40 409.30L656.90 412.28" fill="none" stroke="#383838" stroke-width="1.15" stroke-linecap="round" stroke-linejoin="round"/><path d="M770.40 412.28L773.90 409.30L770.40 406.32" fill="none" stroke="#383838" stroke-width="1.15" stroke-linecap="round" stroke-linejoin="round"/><path d="M795 245.6V298M795 321V391.6" stroke="#6a98f8" stroke-width="1.0" fill="none"/><path d="M797.98 249.10L795.00 245.60L792.02 249.10" fill="none" stroke="#6a98f8" stroke-width="1.0" stroke-linecap="round" stroke-linejoin="round"/><path d="M792.02 388.10L795.00 391.60L797.98 388.10" fill="none" stroke="#6a98f8" stroke-width="1.0" stroke-linecap="round" stroke-linejoin="round"/></svg>
<span class="t" style="left:324.50px;top:216.78px;font-size:6.8px;line-height:8.84px;color:#000;transform:scaleX(1.000);transform-origin:left center;">52ft2 I 4.8m2</span>
<span class="t" style="left:401.80px;top:212.08px;font-size:6.8px;line-height:8.84px;color:#000;transform:scaleX(1.069);transform-origin:left center;">Minimum 32</span>
<span class="t" style="left:410.50px;top:221.68px;font-size:6.8px;line-height:8.84px;color:#000;transform:scaleX(1.000);transform-origin:left center;">81.3cm</span>
<span class="t" style="left:391.70px;top:288.08px;font-size:6.8px;line-height:8.84px;color:#000;transform:scaleX(0.998);transform-origin:left center;">Clear Floor Space</span>
<span class="t" style="left:396.90px;top:297.58px;font-size:6.8px;line-height:8.84px;color:#000;transform:scaleX(1.023);transform-origin:left center;">60" | 152.5 cm</span>
<span class="t" style="left:554.60px;top:288.08px;font-size:6.8px;line-height:8.84px;color:#000;transform:scaleX(0.984);transform-origin:left center;">5'4"</span>
<span class="t" style="left:551.20px;top:297.58px;font-size:6.8px;line-height:8.84px;color:#000;transform:scaleX(0.995);transform-origin:left center;">1.63m</span>
<span class="t" style="left:418.40px;top:378.18px;font-size:6.8px;line-height:8.84px;color:#000;transform:scaleX(1.073);transform-origin:left center;">9'8"</span>
<span class="t" style="left:415.10px;top:387.78px;font-size:6.8px;line-height:8.84px;color:#000;transform:scaleX(0.984);transform-origin:left center;">2.95m</span>
<span class="t" style="left:647.30px;top:218.28px;font-size:6.8px;line-height:8.84px;color:#000;transform:scaleX(1.056);transform-origin:left center;">8'4" I</span>
<span class="t" style="left:646.10px;top:227.48px;font-size:6.8px;line-height:8.84px;color:#000;transform:scaleX(1.000);transform-origin:left center;">2.54m</span>
<span class="t" style="left:794.60px;top:301.98px;font-size:6.8px;line-height:8.84px;color:#000;transform:scaleX(1.036);transform-origin:left center;">6'10"</span>
<span class="t" style="left:793.40px;top:311.78px;font-size:6.8px;line-height:8.84px;color:#000;transform:scaleX(0.984);transform-origin:left center;">2.08m</span>
<span class="t" style="left:600.00px;top:376.38px;font-size:6.8px;line-height:8.84px;color:#000;transform:scaleX(0.979);transform-origin:left center;">53ft2</span>
<span class="t" style="left:597.80px;top:385.58px;font-size:6.8px;line-height:8.84px;color:#000;transform:scaleX(1.016);transform-origin:left center;">4.9m2</span>
<span class="t" style="left:694.70px;top:406.08px;font-size:6.8px;line-height:8.84px;color:#000;transform:scaleX(1.012);transform-origin:left center;">5'10" I 1.78m</span>
<!-- p4_left -->
<svg class="r" style="left:0px;top:0px;" width="1000" height="541" viewBox="0 0 1000 541"><path d="M107 282.2V283.4H123.4V282.2M132.6 282.2V283.4H149V282.2" fill="none" stroke="#9a9a9a" stroke-width="0.6" /><circle cx="166.4" cy="282.4" r="1.2" fill="none" stroke="#999" stroke-width="0.5"/><circle cx="217.2" cy="282.4" r="1.4" fill="none" stroke="#999" stroke-width="0.5"/><circle cx="267" cy="282.4" r="1" fill="none" stroke="#999" stroke-width="0.5"/><path d="M190.6 282.6H194" stroke="#999" stroke-width="0.6"/><rect x="5.6" y="296" width="15.20" height="10.60" fill="#fff" stroke="#6e6e6e" stroke-width="0.7" rx="0.8" /><rect x="7.8" y="298" width="10.80" height="6.60" fill="none" stroke="#9a9a9a" stroke-width="0.5" rx="0" stroke-dasharray="0.8 0.8"/><rect x="35.6" y="293.6" width="6.00" height="15.00" fill="#fff" stroke="#6e6e6e" stroke-width="0.7" rx="0" /><rect x="37" y="296.6" width="2.40" height="8.80" fill="#fff" stroke="#6e6e6e" stroke-width="0.5" rx="0" /><path d="M35 293.6H42M35 308.6H42" fill="none" stroke="#6e6e6e" stroke-width="0.8" /><rect x="60.4" y="290.4" width="1.40" height="21.20" fill="#fff" stroke="#6e6e6e" stroke-width="0.6" rx="0.6" /><rect x="61.8" y="292.4" width="6.00" height="1.40" fill="#fff" stroke="#6e6e6e" stroke-width="0.5" rx="0" /><rect x="61.8" y="308.6" width="6.00" height="1.40" fill="#fff" stroke="#6e6e6e" stroke-width="0.5" rx="0" /><path d="M87.6 290.6H91.4V311.4H87.6" fill="none" stroke="#6e6e6e" stroke-width="0.9" /><path d="M91.6 291V311" fill="none" stroke="#9a9a9a" stroke-width="0.8" /><rect x="111.2" y="296.6" width="1.60" height="9.20" fill="#fff" stroke="#6e6e6e" stroke-width="0.5" rx="0.5" /><ellipse cx="116.4" cy="301.2" rx="2.2" ry="1.9" fill="#fff" stroke="#6e6e6e" stroke-width="0.5"/><path d="M112.8 301.2H114.2" fill="none" stroke="#6e6e6e" stroke-width="1.0" /><path d="M137.8 292.2V310.6" fill="none" stroke="#6e6e6e" stroke-width="1.0" /><ellipse cx="141.20000000000002" cy="296.80" rx="2" ry="1.7" fill="#fff" stroke="#6e6e6e" stroke-width="0.5"/><path d="M137.8 296.80H139.4" fill="none" stroke="#6e6e6e" stroke-width="1.2" /><ellipse cx="141.20000000000002" cy="306.00" rx="2" ry="1.7" fill="#fff" stroke="#6e6e6e" stroke-width="0.5"/><path d="M137.8 306.00H139.4" fill="none" stroke="#6e6e6e" stroke-width="1.2" /><path d="M163.8 290.4V311.8" fill="none" stroke="#6e6e6e" stroke-width="1.0" /><ellipse cx="167.20000000000002" cy="293.97" rx="2" ry="1.7" fill="#fff" stroke="#6e6e6e" stroke-width="0.5"/><path d="M163.8 293.97H165.4" fill="none" stroke="#6e6e6e" stroke-width="1.2" /><ellipse cx="167.20000000000002" cy="301.10" rx="2" ry="1.7" fill="#fff" stroke="#6e6e6e" stroke-width="0.5"/><path d="M163.8 301.10H165.4" fill="none" stroke="#6e6e6e" stroke-width="1.2" /><ellipse cx="167.20000000000002" cy="308.23" rx="2" ry="1.7" fill="#fff" stroke="#6e6e6e" stroke-width="0.5"/><path d="M163.8 308.23H165.4" fill="none" stroke="#6e6e6e" stroke-width="1.2" /><path d="M189.6 290.4V311.8" fill="none" stroke="#6e6e6e" stroke-width="1.0" /><ellipse cx="193.0" cy="293.07" rx="2" ry="1.7" fill="#fff" stroke="#6e6e6e" stroke-width="0.5"/><path d="M189.6 293.07H191.2" fill="none" stroke="#6e6e6e" stroke-width="1.2" /><ellipse cx="193.0" cy="298.43" rx="2" ry="1.7" fill="#fff" stroke="#6e6e6e" stroke-width="0.5"/><path d="M189.6 298.43H191.2" fill="none" stroke="#6e6e6e" stroke-width="1.2" /><ellipse cx="193.0" cy="303.77" rx="2" ry="1.7" fill="#fff" stroke="#6e6e6e" stroke-width="0.5"/><path d="M189.6 303.77H191.2" fill="none" stroke="#6e6e6e" stroke-width="1.2" /><ellipse cx="193.0" cy="309.12" rx="2" ry="1.7" fill="#fff" stroke="#6e6e6e" stroke-width="0.5"/><path d="M189.6 309.12H191.2" fill="none" stroke="#6e6e6e" stroke-width="1.2" /><rect x="209.8" y="293.4" width="15.00" height="15.20" fill="#fff" stroke="#6e6e6e" stroke-width="0.6" rx="1.4" /><circle cx="214.1" cy="297.9" r="2.5" fill="#fff" stroke="#6e6e6e" stroke-width="0.5"/><circle cx="220.5" cy="297.9" r="2.5" fill="#fff" stroke="#6e6e6e" stroke-width="0.5"/><circle cx="214.1" cy="304.2" r="2.5" fill="#fff" stroke="#6e6e6e" stroke-width="0.5"/><circle cx="220.5" cy="304.2" r="2.5" fill="#fff" stroke="#6e6e6e" stroke-width="0.5"/><path d="M236 297.4A5.6 5.6 0 0 1 250 297.4A5.6 5.6 0 0 1 250 309.2H236A5.6 5.6 0 0 1 236 297.4Z" fill="#fff" stroke="#6e6e6e" stroke-width="0.5"/><circle cx="243" cy="297.6" r="4.4" fill="#fff" stroke="#6e6e6e" stroke-width="0.5"/><circle cx="237.4" cy="304.4" r="4.4" fill="#fff" stroke="#6e6e6e" stroke-width="0.5"/><circle cx="248.6" cy="304.4" r="4.4" fill="#fff" stroke="#6e6e6e" stroke-width="0.5"/><circle cx="243" cy="297.6" r="2.4" fill="#fff" stroke="#9a9a9a" stroke-width="0.5"/><circle cx="237.4" cy="304.4" r="2.4" fill="#fff" stroke="#9a9a9a" stroke-width="0.5"/><circle cx="248.6" cy="304.4" r="2.4" fill="#fff" stroke="#9a9a9a" stroke-width="0.5"/><circle cx="243" cy="306.6" r="1.8" fill="#ddd" stroke="#6e6e6e" stroke-width="0.5"/><rect x="257.4" y="294.8" width="21.80" height="13.20" fill="#d6d6d6" stroke="#6e6e6e" stroke-width="0.7" rx="0" /><rect x="259.4" y="296.4" width="17.80" height="10.00" fill="#fff" stroke="#6e6e6e" stroke-width="0.5" rx="0" /><ellipse cx="263.2" cy="301.4" rx="2.6" ry="3" fill="#fff" stroke="#6e6e6e" stroke-width="0.5"/><ellipse cx="273.6" cy="301.4" rx="2.6" ry="3" fill="#fff" stroke="#6e6e6e" stroke-width="0.5"/><rect x="2.4" y="319.6" width="21.20" height="14.20" fill="#e4e4e4" stroke="#6e6e6e" stroke-width="0.7" rx="0.6" /><circle cx="7.2" cy="323.4" r="3" fill="#fff" stroke="#6e6e6e" stroke-width="0.5"/><circle cx="7.2" cy="330" r="3" fill="#fff" stroke="#6e6e6e" stroke-width="0.5"/><circle cx="19" cy="323.4" r="3" fill="#fff" stroke="#6e6e6e" stroke-width="0.5"/><circle cx="19" cy="330" r="3" fill="#fff" stroke="#6e6e6e" stroke-width="0.5"/><rect x="11.6" y="321" width="3.20" height="11.60" fill="#fff" stroke="#6e6e6e" stroke-width="0.5" rx="0" /><rect x="28.4" y="321.2" width="21.20" height="10.60" fill="#e4e4e4" stroke="#6e6e6e" stroke-width="0.8" rx="0.6" /><circle cx="33" cy="326.5" r="3.6" fill="#fff" stroke="#6e6e6e" stroke-width="0.5"/><circle cx="45" cy="326.5" r="3.6" fill="#fff" stroke="#6e6e6e" stroke-width="0.5"/><circle cx="39" cy="326.5" r="3.2" fill="#fff" stroke="#6e6e6e" stroke-width="0.6"/><rect x="55.4" y="316.4" width="18.20" height="19.40" fill="#fff" stroke="#9a9a9a" stroke-width="0.6" rx="0.6" /><path d="M62 336.4H67" fill="none" stroke="#6e6e6e" stroke-width="0.8" /><rect x="79.4" y="321.4" width="21.20" height="10.20" fill="#fff" stroke="#9a9a9a" stroke-width="0.6" rx="0" /><path d="M82 332H84.4M88.8 332H91.2M95.6 332H98" fill="none" stroke="#6e6e6e" stroke-width="0.7" /><rect x="104.6" y="320.4" width="21.20" height="13.00" fill="#fff" stroke="#9a9a9a" stroke-width="0.6" rx="0" /><path d="M104.6 332.2H125.8" fill="none" stroke="#9a9a9a" stroke-width="1.2" /><rect x="2.6" y="364.4" width="21.80" height="17.40" fill="#cfcfcf" stroke="#6e6e6e" stroke-width="0.6" rx="0" /><rect x="4.2" y="366" width="8.40" height="14.40" fill="#fff" stroke="#6e6e6e" stroke-width="0.5" rx="0" /><rect x="14.4" y="366" width="8.40" height="14.40" fill="#fff" stroke="#6e6e6e" stroke-width="0.5" rx="0" /><path d="M12.6 373H14.4" fill="none" stroke="#333" stroke-width="0.8" /><rect x="27.8" y="364.4" width="22.00" height="17.20" fill="#8a8a8a" stroke="#666" stroke-width="0.6" rx="0" /><rect x="29.6" y="366" width="18.40" height="14.00" fill="#fff" stroke="#666" stroke-width="0.4" rx="0" /><path d="M34.20 366V380M38.80 366V380M43.40 366V380M29.6 370.67H48M29.6 375.33H48" fill="none" stroke="#777" stroke-width="0.8" /><path d="M38.8 366V380" fill="none" stroke="#444" stroke-width="1.2" /><circle cx="38.8" cy="373" r="0.8" fill="#111"/><rect x="55.2" y="362.4" width="17.80" height="21.80" fill="#bdbdbd" stroke="#6e6e6e" stroke-width="0.6" rx="0" /><rect x="56.6" y="363.6" width="15.00" height="19.00" fill="#fff" stroke="#555" stroke-width="0.4" rx="0" /><path d="M61.60 363.6V382.6M66.60 363.6V382.6M56.6 368.35H71.6M56.6 373.10H71.6M56.6 377.85H71.6" fill="none" stroke="#333" stroke-width="0.9" /><rect x="82.2" y="362.4" width="15.60" height="21.80" fill="#9a9a9a" stroke="#666" stroke-width="0.6" rx="0" /><rect x="84" y="364" width="12.00" height="18.60" fill="#fff" stroke="#555" stroke-width="0.4" rx="0" /><path d="M87.00 364V382.6M90.00 364V382.6M93.00 364V382.6M84 368.65H96M84 373.30H96M84 377.95H96" fill="none" stroke="#333" stroke-width="0.7" /><path d="M90 364V382.6" fill="none" stroke="#222" stroke-width="1.3" /><rect x="106.2" y="362.4" width="18.60" height="21.60" fill="#fff" stroke="#555" stroke-width="0.9" rx="0" /><path d="M110.85 362.4V384M115.50 362.4V384M120.15 362.4V384" fill="none" stroke="#555" stroke-width="0.6" /><path d="M115.5 362.4V384" fill="none" stroke="#444" stroke-width="1.1" /><path d="M106.2 368H124.8M106.2 379H124.8" fill="none" stroke="#777" stroke-width="0.5" /><path d="M107 383L109 380L111 383M120 383L122 380L124 383" fill="none" stroke="#777" stroke-width="0.5" /><path d="M131.6 368L140.6 362.4L149.8 368Z" fill="#fff" stroke="#6e6e6e" stroke-width="0.6"/><rect x="132.4" y="368" width="16.60" height="15.00" fill="#fff" stroke="#6e6e6e" stroke-width="0.6" rx="0" /><rect x="134.6" y="369.6" width="12.20" height="11.80" fill="#fff" stroke="#666" stroke-width="0.6" rx="0" /><path d="M140.70 369.6V381.4M134.6 373.53H146.8M134.6 377.47H146.8" fill="none" stroke="#666" stroke-width="0.6" /><path d="M131.4 383.4H150" fill="none" stroke="#6e6e6e" stroke-width="1.0" /><path d="M156.6 363.6L166.2 373" fill="none" stroke="#555" stroke-width="0.7" /><path d="M164.6 376L170.2 372.6L175.8 376Z" fill="#fff" stroke="#555" stroke-width="0.6"/><rect x="165.2" y="376" width="10.20" height="6.40" fill="#fff" stroke="#555" stroke-width="0.9" rx="0" /><path d="M168.60 376V382.4M172.00 376V382.4" fill="none" stroke="#555" stroke-width="0.6" /><rect x="184.4" y="362.2" width="14.60" height="22.00" fill="#c4c4c4" stroke="#6e6e6e" stroke-width="0.6" rx="0" /><rect x="187.4" y="364.2" width="9.40" height="18.20" fill="#fff" stroke="#666" stroke-width="0.5" rx="0" /><rect x="195.6" y="371.4" width="1.8" height="1.6" fill="#444"/><rect x="206.4" y="366.6" width="22.40" height="12.20" fill="#7a7a7a" stroke="#555" stroke-width="0.6" rx="0" /><rect x="208.2" y="368.2" width="5.20" height="9.00" fill="#fff" stroke="#555" stroke-width="0.4" rx="0" /><rect x="215" y="368.2" width="5.20" height="9.00" fill="#fff" stroke="#555" stroke-width="0.4" rx="0" /><rect x="221.8" y="368.2" width="5.20" height="9.00" fill="#fff" stroke="#555" stroke-width="0.4" rx="0" /><rect x="236.4" y="362.4" width="12.60" height="21.80" fill="#fff" stroke="#6e6e6e" stroke-width="0.6" rx="0" /><rect x="262.2" y="362.4" width="12.60" height="21.80" fill="#fff" stroke="#6e6e6e" stroke-width="0.6" rx="0" /><path d="M236.8 363L248.6 373.2L236.8 383.6M237 373.2H248.6" fill="none" stroke="#bbb" stroke-width="0.5" stroke-dasharray="0.8 0.8"/><path d="M274.4 363L262.6 373.2L274.4 383.6M262.6 373.2H274.4" fill="none" stroke="#bbb" stroke-width="0.5" stroke-dasharray="0.8 0.8"/><rect x="2.6" y="389.4" width="22.00" height="18.60" fill="#fff" stroke="#6e6e6e" stroke-width="0.7" rx="0.6" /><path d="M13.6 389.4V408" fill="none" stroke="#666" stroke-width="0.6" /><path d="M3 390L13.4 398.6L3 407.6M24.2 390L13.8 398.6L24.2 407.6M3 398.6H24.2" fill="none" stroke="#c4c4c4" stroke-width="0.5" stroke-dasharray="0.8 0.8"/><rect x="27.6" y="391.6" width="22.00" height="13.40" fill="#fff" stroke="#6e6e6e" stroke-width="0.7" rx="0.6" /><path d="M34.93 391.6V405M42.27 391.6V405" fill="none" stroke="#777" stroke-width="0.6" /><path d="M28 398.4H49.4" fill="none" stroke="#c4c4c4" stroke-width="0.5" stroke-dasharray="0.8 0.8"/><path d="M58.6 391.6V408H70V391.6" fill="#fff" stroke="#6e6e6e" stroke-width="0.6"/><path d="M57.6 391.8V389.8L64.2 387.6L71 389.8V391.8Z" fill="#fff" stroke="#6e6e6e" stroke-width="0.6"/><path d="M64.3 391.8V407M58.6 399.6H70" fill="none" stroke="#555" stroke-width="0.6" /><rect x="58" y="407" width="12.60" height="2.00" fill="#fff" stroke="#6e6e6e" stroke-width="0.5" rx="0" /><rect x="83.6" y="387.6" width="12.00" height="21.80" fill="#fff" stroke="#6e6e6e" stroke-width="0.7" rx="0.6" /><path d="M89.60 387.6V409.4M83.6 398.50H95.6" fill="none" stroke="#666" stroke-width="0.6" /><rect x="109.4" y="387.6" width="12.00" height="21.80" fill="#fff" stroke="#6e6e6e" stroke-width="0.7" rx="0.6" /><path d="M109.4 398.4H121.4" fill="none" stroke="#666" stroke-width="0.7" /><rect x="129.6" y="391.6" width="22.00" height="13.80" fill="#e0e0e0" stroke="#6e6e6e" stroke-width="0.7" rx="0" /><rect x="131.8" y="393.4" width="8.00" height="10.20" fill="#fff" stroke="#6e6e6e" stroke-width="0.5" rx="0" /><rect x="141.4" y="393.4" width="8.00" height="10.20" fill="#fff" stroke="#6e6e6e" stroke-width="0.5" rx="0" /><rect x="161.2" y="388.2" width="10.60" height="21.40" fill="#fff" stroke="#6e6e6e" stroke-width="0.7" rx="0" /><rect x="162.79999999999998" y="389.8" width="7.40" height="18.60" fill="#fff" stroke="#8a8a8a" stroke-width="0.5" rx="0" /><ellipse cx="166.5" cy="395.2" rx="2" ry="3.6" fill="none" stroke="#8a8a8a" stroke-width="0.5"/><ellipse cx="166.5" cy="404.2" rx="2" ry="3" fill="none" stroke="#8a8a8a" stroke-width="0.5"/><circle cx="162.79999999999998" cy="398.29999999999995" r="1" fill="#222"/><rect x="187.2" y="388.2" width="10.60" height="21.40" fill="#fff" stroke="#6e6e6e" stroke-width="0.7" rx="0" /><rect x="188.79999999999998" y="389.8" width="7.40" height="18.60" fill="#fff" stroke="#8a8a8a" stroke-width="0.5" rx="0" /><rect x="189.79999999999998" y="390.8" width="5.40" height="16.40" fill="#d8d8d8" stroke="#8a8a8a" stroke-width="0.4" rx="0" /><path d="M192.50 390.8V407.20000000000005M189.79999999999998 394.08H195.2M189.79999999999998 397.36H195.2M189.79999999999998 400.64H195.2M189.79999999999998 403.92H195.2" fill="none" stroke="#777" stroke-width="0.5" /><circle cx="188.79999999999998" cy="398.29999999999995" r="1" fill="#222"/><rect x="212.2" y="388.2" width="10.60" height="21.40" fill="#fff" stroke="#6e6e6e" stroke-width="0.7" rx="0" /><rect x="213.79999999999998" y="389.8" width="7.40" height="18.60" fill="#fff" stroke="#8a8a8a" stroke-width="0.5" rx="0" /><rect x="215.5" y="390.8" width="4.00" height="16.20" fill="#888" stroke="#666" stroke-width="0.4" rx="0" /><circle cx="213.79999999999998" cy="398.29999999999995" r="1" fill="#222"/><rect x="238.2" y="388.2" width="10.60" height="21.40" fill="#fff" stroke="#6e6e6e" stroke-width="0.7" rx="0" /><rect x="239.79999999999998" y="389.8" width="7.40" height="18.60" fill="#fff" stroke="#8a8a8a" stroke-width="0.5" rx="0" /><rect x="239.79999999999998" y="389.8" width="3.00" height="18.60" fill="#999" stroke="#777" stroke-width="0.4" rx="0" /><circle cx="239.79999999999998" cy="398.29999999999995" r="1" fill="#222"/><rect x="263.2" y="388.2" width="10.60" height="21.40" fill="#fff" stroke="#6e6e6e" stroke-width="0.7" rx="0" /><rect x="264.8" y="389.8" width="7.40" height="18.60" fill="#fff" stroke="#8a8a8a" stroke-width="0.5" rx="0" /><ellipse cx="268.5" cy="394.59999999999997" rx="1.6" ry="2.2" fill="none" stroke="#777" stroke-width="0.5"/><ellipse cx="268.5" cy="399.2" rx="1.6" ry="2.2" fill="none" stroke="#777" stroke-width="0.5"/><ellipse cx="268.5" cy="403.8" rx="1.6" ry="2.2" fill="none" stroke="#777" stroke-width="0.5"/><circle cx="264.8" cy="398.29999999999995" r="1" fill="#222"/><rect x="4.4" y="413.4" width="18.20" height="21.80" fill="#c8c8c8" stroke="#6e6e6e" stroke-width="0.6" rx="0" /><rect x="6" y="415" width="15.00" height="18.80" fill="#fff" stroke="#666" stroke-width="0.5" rx="0" /><path d="M13.5 415V433.8M6 424.6H21M6 418H21" fill="none" stroke="#444" stroke-width="0.8" /><circle cx="13.5" cy="424.6" r="1.1" fill="#111"/><rect x="31" y="413.4" width="15.80" height="21.60" fill="#fff" stroke="#222" stroke-width="1.0" rx="0" /><path d="M31 415.4H46.8" fill="none" stroke="#222" stroke-width="1.4" /><path d="M38.9 416V435" fill="none" stroke="#333" stroke-width="0.7" /><path d="M36.2 422V429M41.6 422V429" fill="none" stroke="#222" stroke-width="0.7" /><path d="M32 428L36 420M42 432L46 425" fill="none" stroke="#aaa" stroke-width="0.5" /><path d="M56.6 435V421.4A7.4 8 0 0 1 71.4 421.4V435Z" fill="#fff" stroke="#9a9a9a" stroke-width="0.6"/><rect x="79.4" y="414.8" width="20.20" height="18.60" fill="#fff" stroke="#6e6e6e" stroke-width="0.7" rx="0" /><path d="M79.4 418.2H99.6M89.5 418.2V433.4" fill="none" stroke="#666" stroke-width="0.6" /><path d="M88 416.4H91" fill="none" stroke="#6e6e6e" stroke-width="1.0" /><circle cx="89.5" cy="425.8" r="0.9" fill="#333"/><rect x="104.6" y="415.4" width="21.00" height="17.40" fill="#fff" stroke="#6e6e6e" stroke-width="0.7" rx="0" /><path d="M104.6 416.6H125.6M104.6 431.8H125.6" fill="none" stroke="#9a9a9a" stroke-width="0.8" /><path d="M115.1 416.6V431.8" fill="none" stroke="#555" stroke-width="0.6" /><path d="M113 424H117.2" fill="none" stroke="#333" stroke-width="0.9" /><rect x="129.6" y="418.2" width="22.20" height="11.60" fill="#fff" stroke="#6e6e6e" stroke-width="0.8" rx="0" /><path d="M137.00 418.2V429.8M144.40 418.2V429.8" fill="none" stroke="#666" stroke-width="0.6" /><path d="M135.6 424H137.8M143.6 424H145.8" fill="none" stroke="#444" stroke-width="0.8" /><rect x="155.4" y="415.6" width="21.40" height="16.40" fill="#8a8a8a" stroke="#666" stroke-width="0.6" rx="0" /><path d="M156 418.4H176M156 421.2H176M156 424H176M156 426.8H176M156 429.6H176" fill="none" stroke="#555" stroke-width="1.0" /><rect x="164.8" y="415.6" width="2.40" height="16.40" fill="#fff" stroke="#888" stroke-width="0.4" rx="0" /><circle cx="166.6" cy="424" r="0.9" fill="#111"/><rect x="180.8" y="418.6" width="22.00" height="10.20" fill="#fff" stroke="#9a9a9a" stroke-width="1.0" rx="0" /><path d="M191.8 418.6V428.8" fill="none" stroke="#888" stroke-width="0.5" /><path d="M189.6 424H194" fill="none" stroke="#444" stroke-width="0.9" /><rect x="206.4" y="420.8" width="22.40" height="6.80" fill="#fff" stroke="#6e6e6e" stroke-width="0.8" rx="0" /><path d="M217.6 420.8V427.6" fill="none" stroke="#888" stroke-width="0.5" /><path d="M212 424.2H215M220 424.2H223" fill="none" stroke="#444" stroke-width="0.8" /><path d="M206.4 426.8H228.8" fill="none" stroke="#6e6e6e" stroke-width="0.9" /><path d="M232.2 425.4Q238 423.4 243 422.2Q248 423.4 253.8 425.4" fill="none" stroke="#777" stroke-width="1.2" /><path d="M268.4 419.6V429.4" fill="none" stroke="#111" stroke-width="1.8" /><circle cx="268.4" cy="419.4" r="1.9" fill="#111"/><circle cx="268.4" cy="429.6" r="1.6" fill="#111"/><rect x="2.6" y="461.4" width="20.20" height="18.20" fill="#fff" stroke="#6e6e6e" stroke-width="0.9" rx="0" /><path d="M28.4 463.4H39.4V470.6H48.6V478.6H28.4Z" fill="#fff" stroke="#6e6e6e" stroke-width="0.9"/><path d="M53.6 463.8H74.6V471.6H68.6V477.6H59.8V471.6H53.6Z" fill="#fff" stroke="#6e6e6e" stroke-width="0.9"/><rect x="78.6" y="461.4" width="22.00" height="18.00" fill="#fff" stroke="#9a9a9a" stroke-width="0.8" rx="0.6" /><path d="M79 463.00H100.2M79 465.40H100.2M79 467.80H100.2M79 470.20H100.2M79 472.60H100.2M79 475.00H100.2M79 477.40H100.2" fill="none" stroke="#d4d4d4" stroke-width="0.6" /><path d="M105.6 460.6H116V469.6H125.4V480H105.6Z" fill="#fff" stroke="#9a9a9a" stroke-width="0.8"/><path d="M106 462.20H115.6M106 464.60H115.6M106 467.00H115.6" fill="none" stroke="#d4d4d4" stroke-width="0.6" /><path d="M106 471.20H125M106 473.60H125M106 476.00H125M106 478.40H125" fill="none" stroke="#d4d4d4" stroke-width="0.6" /><path d="M129.6 461.8H151.8V470H145.6V478.6H135.6V470H129.6Z" fill="#fff" stroke="#9a9a9a" stroke-width="0.8"/><path d="M130 463.40H151.4M130 465.80H151.4M130 468.20H151.4" fill="none" stroke="#d4d4d4" stroke-width="0.6" /><path d="M136 470.60H145.2M136 473.00H145.2M136 475.40H145.2M136 477.80H145.2" fill="none" stroke="#d4d4d4" stroke-width="0.6" /><path d="M155.2 469.2H177.6" fill="none" stroke="#8a8a8a" stroke-width="0.9" /><path d="M190.4 460V481.4" fill="none" stroke="#7a7a7a" stroke-width="1.3" /><path d="M206.4 474.2A11.6 9 0 0 1 229 474.2" fill="none" stroke="#7a7a7a" stroke-width="1.6" /><path d="M212 472.6H223" fill="none" stroke="#b0b0b0" stroke-width="0.6" stroke-dasharray="1 0.6"/><path d="M232 471.6H254" fill="none" stroke="#7a7a7a" stroke-width="1.9" /><path d="M267 459.6V481.6" fill="none" stroke="#7a7a7a" stroke-width="2.1" /><path d="M2.8 500.6A11 10 0 0 1 23.6 500.6" fill="none" stroke="#7a7a7a" stroke-width="1.9" /><path d="M8.6 499.4H18" fill="none" stroke="#b0b0b0" stroke-width="0.6" stroke-dasharray="1 0.6"/><path d="M28.6 496.6H49.6" fill="none" stroke="#8a8a8a" stroke-width="0.7" stroke-dasharray="3 1"/><path d="M53.8 496.6H74.2" fill="none" stroke="#9a9a9a" stroke-width="1.1" /><rect x="78.6" y="489.2" width="22.20" height="13.60" fill="#767676" stroke="#6a6a6a" stroke-width="0.5" rx="0" /><rect x="104.4" y="489.2" width="21.20" height="13.60" fill="#767676" stroke="#6a6a6a" stroke-width="0.5" rx="0" /><rect x="133.2" y="488.2" width="15.00" height="15.40" fill="#767676" stroke="#6a6a6a" stroke-width="0.5" rx="0" /><circle cx="166.2" cy="496" r="10" fill="#767676" stroke="#6a6a6a" stroke-width="0.5"/><rect x="181.4" y="496.2" width="21.60" height="3.60" fill="#fff" stroke="#555" stroke-width="0.6" rx="0" stroke-dasharray="1.2 0.8"/><path d="M181.4 498H203" fill="none" stroke="#555" stroke-width="0.6" stroke-dasharray="1.6 1"/><path d="M217.4 487V505M208.4 496H226" fill="none" stroke="#8a8a8a" stroke-width="0.5" stroke-dasharray="1.4 1.6"/><path d="M242.6 489.6V506" fill="none" stroke="#aaa" stroke-width="0.5" stroke-dasharray="1.4 2.4"/><circle cx="242.6" cy="487.6" r="1.8" fill="#fff" stroke="#888" stroke-width="0.5"/></svg>
<div class="r" style="left:0px;top:340.2px;width:293.00px;height:17.80px;background:#e1e1e1;"></div><svg class="r" style="left:5.6px;top:347.50px" width="4.2" height="3" viewBox="0 0 4.2 3"><path d="M0 0H4.2L2.1 3Z" fill="#666"/></svg><span class="t" style="left:13.00px;top:345.51px;font-size:6.6px;line-height:8.58px;color:#1c1c1c;transform:scaleX(0.926);transform-origin:left center;">Windows and Doors (Elevation)</span><svg class="r" style="left:284.6px;top:347.00px" width="4.4" height="4.4" viewBox="0 0 4.4 4.4"><path d="M0.4 0.4L4 4M4 0.4L0.4 4" stroke="#777" stroke-width="0.6" fill="none"/></svg>
<div class="r" style="left:0px;top:437.8px;width:293.00px;height:18.00px;background:#e1e1e1;"></div><svg class="r" style="left:5.6px;top:445.20px" width="4.2" height="3" viewBox="0 0 4.2 3"><path d="M0 0H4.2L2.1 3Z" fill="#666"/></svg><span class="t" style="left:13.00px;top:443.21px;font-size:6.6px;line-height:8.58px;color:#1c1c1c;transform:scaleX(0.924);transform-origin:left center;">Wall Shell and Structure</span><svg class="r" style="left:284.6px;top:444.70px" width="4.4" height="4.4" viewBox="0 0 4.4 4.4"><path d="M0.4 0.4L4 4M4 0.4L0.4 4" stroke="#777" stroke-width="0.6" fill="none"/></svg>
<div class="r" style="left:0px;top:509.6px;width:293.00px;height:17.80px;background:#e1e1e1;"></div><svg class="r" style="left:5.6px;top:516.90px" width="4.2" height="3" viewBox="0 0 4.2 3"><path d="M0 0H4.2L2.1 3Z" fill="#666"/></svg><span class="t" style="left:13.00px;top:514.91px;font-size:6.6px;line-height:8.58px;color:#1c1c1c;transform:scaleX(0.946);transform-origin:left center;">Kitchen and Dining Room</span><svg class="r" style="left:284.6px;top:516.40px" width="4.4" height="4.4" viewBox="0 0 4.4 4.4"><path d="M0.4 0.4L4 4M4 0.4L0.4 4" stroke="#777" stroke-width="0.6" fill="none"/></svg>
<!-- p5_right -->
<svg class="r" style="left:839.40px;top:73.50px;" width="8.4" height="8.4" viewBox="0 0 10 10" fill="none" stroke="#8c8c8c" stroke-width="0.8" stroke-linecap="round" stroke-linejoin="round"><path d="M2 2.2L4.8 5L2 7.8M5.4 2.2L8.2 5L5.4 7.8"/></svg>
<svg class="r" style="left:838.40px;top:90.20px;" width="10.4" height="10.4" viewBox="0 0 10 10" fill="none" stroke="#2c2c2c" stroke-width="1.05" stroke-linecap="round" stroke-linejoin="round"><path d="M4.6 1.6L8 5L5 8.2L1.8 5Z"/><path d="M2 5.2H8L5 8.2Z" fill="#3c3c3c"/><path d="M4.6 1.6L3.6 0.6"/><circle cx="8.9" cy="8" r="0.5" fill="#3c3c3c"/></svg>
<div class="r" style="left:834.3px;top:109.1px;width:18.50px;height:18.20px;background:#0a7cfb;"></div>
<svg class="r" style="left:838.30px;top:112.90px;" width="10.6" height="10.6" viewBox="0 0 10 10" fill="none" stroke="#fff" stroke-width="0.9" stroke-linecap="round" stroke-linejoin="round"><rect x="1.4" y="1.4" width="2.9" height="2.9" rx="0.5"/><rect x="5.7" y="1.4" width="2.9" height="2.9" rx="0.5"/><rect x="1.4" y="5.7" width="2.9" height="2.9" rx="0.5"/><rect x="5.7" y="5.7" width="2.9" height="2.9" rx="0.5"/></svg>
<svg class="r" style="left:838.40px;top:136.30px;" width="10.4" height="10.4" viewBox="0 0 10 10" fill="none" stroke="#2c2c2c" stroke-width="1.05" stroke-linecap="round" stroke-linejoin="round"><rect x="1.2" y="1.6" width="7.6" height="6.8" rx="0.6"/><path d="M1.6 7.6L3.8 5.4L5.2 6.8L6.6 5.8L8.4 7.6Z" fill="#3c3c3c"/></svg>
<svg class="r" style="left:838.40px;top:160.20px;" width="10.4" height="10.4" viewBox="0 0 10 10" fill="none" stroke="#2c2c2c" stroke-width="1.05" stroke-linecap="round" stroke-linejoin="round"><path d="M5 1.4L8.8 3.6L5 5.8L1.2 3.6Z"/><path d="M1.2 5.8L5 8L8.8 5.8"/></svg>
<svg class="r" style="left:838.40px;top:183.50px;" width="10.4" height="10.4" viewBox="0 0 10 10" fill="none" stroke="#2c2c2c" stroke-width="1.05" stroke-linecap="round" stroke-linejoin="round"><path d="M1.8 1.2H6.4L8.2 3V8.8H1.8Z"/><path d="M3.4 4.2H6.6M3.4 5.6H6.6M3.4 7H6.6" stroke-width="0.6"/></svg>
<svg class="r" style="left:838.40px;top:206.80px;" width="10.4" height="10.4" viewBox="0 0 10 10" fill="none" stroke="#2c2c2c" stroke-width="1.05" stroke-linecap="round" stroke-linejoin="round"><path d="M1.4 8.6V1.6H4.6V4H8.6V8.6Z"/><path d="M3 3.4V6.8M6 5.4V7.4M4.6 4V8.6" stroke-width="0.7"/></svg>
<svg class="r" style="left:838.40px;top:230.50px;" width="10.4" height="10.4" viewBox="0 0 10 10" fill="none" stroke="#2c2c2c" stroke-width="1.05" stroke-linecap="round" stroke-linejoin="round"><path d="M1.6 2.4C4 2.4 6 7.6 8.4 7.6M1.6 7.6C4 7.6 6 2.4 8.4 2.4"/><circle cx="1.4" cy="2.4" r="0.5"/><circle cx="1.4" cy="7.6" r="0.5"/><circle cx="8.6" cy="2.4" r="0.5"/><circle cx="8.6" cy="7.6" r="0.5"/></svg>
<svg class="r" style="left:838.40px;top:253.70px;" width="10.4" height="10.4" viewBox="0 0 10 10" fill="none" stroke="#2c2c2c" stroke-width="1.05" stroke-linecap="round" stroke-linejoin="round"><path d="M0.8 1.6H9.2M1.8 1.6V6.6H8.2V1.6M3.2 8.8L4.2 6.8M6.8 8.8L5.8 6.8"/><path d="M4.2 3L6.2 4.1L4.2 5.2Z" fill="#3c3c3c" stroke-width="0.4"/></svg>
<svg class="r" style="left:838.40px;top:276.70px;" width="10.4" height="10.4" viewBox="0 0 10 10" fill="none" stroke="#2c2c2c" stroke-width="1.05" stroke-linecap="round" stroke-linejoin="round"><path d="M2 3A3.7 3.7 0 1 1 1.4 5.6"/><path d="M1 1.8L2 3.2L3.4 2.6M5 3.2V5.2L6.4 6"/></svg>
<span class="t" style="left:916.00px;top:74.22px;font-size:6.9px;line-height:8.97px;color:#1c1c1c;transform:scaleX(0.980);transform-origin:left center;font-weight:bold;">Theme</span>
<div class="r" style="left:861.6px;top:93.7px;width:66.70px;height:66.70px;background:#fff;"></div>
<svg class="r" style="left:0px;top:0px;" width="1000" height="541" viewBox="0 0 1000 541"><path fill="#fff" stroke="#333" stroke-width="0.7" d="M882.7 109.2L893 116L882.7 122.8L872.4 116Z"/><path fill="#fff" stroke="#333" stroke-width="0.7" d="M905 118.6H922.2L918 129.6H900.8Z"/><rect fill="#fff" stroke="#333" stroke-width="0.7" x="874.4" y="132.6" width="17.2" height="14" rx="2"/><path d="M882.7 122.8V131M891.6 139.6H910.3V131.4" fill="none" stroke="#222" stroke-width="0.7"/><path d="M881.2 129.8H884.2L882.7 132.8ZM908.8 132.6H911.8L910.3 129.6Z" fill="#111"/></svg>
<span class="t" style="left:878.43px;top:113.48px;font-size:4.8px;line-height:6.24px;color:#111;transform:scaleX(0.860);transform-origin:center center;font-weight:bold;">text</span>
<span class="t" style="left:907.23px;top:121.48px;font-size:4.8px;line-height:6.24px;color:#111;transform:scaleX(0.860);transform-origin:center center;font-weight:bold;">text</span>
<span class="t" style="left:878.73px;top:136.98px;font-size:4.8px;line-height:6.24px;color:#111;transform:scaleX(0.860);transform-origin:center center;font-weight:bold;">text</span>
<span class="t" style="left:896.93px;top:140.98px;font-size:4.8px;line-height:6.24px;color:#111;transform:scaleX(0.860);transform-origin:center center;font-weight:bold;">text</span>
<svg class="r" style="left:942.2px;top:98.4px" width="8.4" height="8.4" viewBox="0 0 9 9"><rect x="0" y="0" width="2.6" height="2.6" fill="#4a4a4a"/><rect x="3.2" y="0" width="2.6" height="2.6" fill="#3dae7a"/><rect x="6.4" y="0" width="2.6" height="2.6" fill="#4a8cf0"/><rect x="0" y="3.2" width="2.6" height="2.6" fill="#3dae7a"/><rect x="3.2" y="3.2" width="2.6" height="2.6" fill="#f0a030"/><rect x="6.4" y="3.2" width="2.6" height="2.6" fill="#e04a4a"/><rect x="0" y="6.4" width="2.6" height="2.6" fill="#d04a9a"/><rect x="3.2" y="6.4" width="2.6" height="2.6" fill="#f07a30"/><rect x="6.4" y="6.4" width="2.6" height="2.6" fill="#f07a30"/></svg>
<span class="t" style="left:958.00px;top:98.68px;font-size:6.5px;line-height:8.45px;color:#4a4a4a;transform:scaleX(0.975);transform-origin:left center;">Novel</span>
<span class="t" style="left:940.80px;top:114.31px;font-size:8.6px;line-height:11.18px;color:#3a3a3a;transform:scaleX(1.027);transform-origin:left center;">Aa</span>
<span class="t" style="left:958.00px;top:115.48px;font-size:6.5px;line-height:8.45px;color:#4a4a4a;transform:scaleX(0.946);transform-origin:left center;">Arial</span>
<svg class="r" style="left:941.40px;top:131.20px;" width="10" height="10" viewBox="0 0 10 10" fill="none" stroke="#2c2c2c" stroke-width="0.8" stroke-linecap="round" stroke-linejoin="round"><path d="M1.6 2.2H4.6V7.4H8.6"/><path d="M7.4 6.2L8.8 7.4L7.4 8.6"/><rect x="0.6" y="1.4" width="1.4" height="1.4" fill="#3c3c3c" stroke="none"/></svg>
<span class="t" style="left:958.00px;top:132.28px;font-size:6.5px;line-height:8.45px;color:#4a4a4a;transform:scaleX(0.869);transform-origin:left center;">General 1</span>
<svg class="r" style="left:941.20px;top:147.40px;" width="10.4" height="10.4" viewBox="0 0 10 10" fill="none" stroke="#2c2c2c" stroke-width="1.05" stroke-linecap="round" stroke-linejoin="round"><path d="M1.4 1.4H7.4L8.6 2.6V8.6H1.4Z"/><path d="M3 1.6V4H6.6V1.6"/></svg>
<span class="t" style="left:958.00px;top:148.88px;font-size:6.5px;line-height:8.45px;color:#4a4a4a;transform:scaleX(0.854);transform-origin:left center;">Save The...</span>
<div class="r" style="left:893.3px;top:167.6px;width:31.50px;height:31.60px;background:#e1e1e1;"></div>
<svg class="r" style="left:872.20px;top:171.20px;" width="10.4" height="10.4" viewBox="0 0 10 10" fill="none" stroke="#2c2c2c" stroke-width="0.9" stroke-linecap="round" stroke-linejoin="round"><rect x="1.2" y="1.2" width="3" height="3"/><rect x="5.8" y="1.2" width="3" height="3"/><rect x="1.2" y="5.8" width="3" height="3"/><rect x="5.8" y="5.8" width="3" height="3"/></svg>
<svg class="r" style="left:903.80px;top:171.10px;" width="10.6" height="10.6" viewBox="0 0 10 10" fill="none" stroke="#4a4a4a" stroke-width="0.8" stroke-linecap="round" stroke-linejoin="round"><rect x="1" y="1.2" width="8" height="7.6" rx="0.4"/><path d="M1 3.2H9" stroke-width="1.3"/><path d="M3.7 3.4V8.8M6.3 3.4V8.8M1 5.2H9M1 7H9" stroke-width="0.5"/></svg>
<svg class="r" style="left:936.20px;top:171.20px;" width="10.4" height="10.4" viewBox="0 0 10 10" fill="none" stroke="#2c2c2c" stroke-width="0.8" stroke-linecap="round" stroke-linejoin="round"><path d="M1.6 2H4.6V7.6H8.6"/><path d="M7.4 6.4L8.8 7.6L7.4 8.8"/><rect x="0.6" y="1.2" width="1.4" height="1.4" fill="#3c3c3c" stroke="none"/></svg>
<span class="t" style="left:967.20px;top:171.18px;font-size:8.8px;line-height:11.44px;color:#3a3a3a;transform:scaleX(1.059);transform-origin:left center;">Aa</span>
<span class="t" style="left:868.00px;top:187.41px;font-size:6.6px;line-height:8.58px;color:#1c1c1c;transform:scaleX(0.905);transform-origin:left center;">Theme</span>
<span class="t" style="left:901.80px;top:187.41px;font-size:6.6px;line-height:8.58px;color:#1c1c1c;transform:scaleX(0.964);transform-origin:left center;">Color</span>
<span class="t" style="left:927.00px;top:187.41px;font-size:6.6px;line-height:8.58px;color:#1c1c1c;transform:scaleX(0.949);transform-origin:left center;">Connector</span>
<span class="t" style="left:967.80px;top:187.41px;font-size:6.6px;line-height:8.58px;color:#1c1c1c;transform:scaleX(0.901);transform-origin:left center;">Text</span>
<svg class="r" style="left:0;top:0" width="1000" height="541"><rect x="861.3" y="207.5" width="127.4" height="14" rx="1" fill="none" stroke="#bcbcbc" stroke-width="0.7" stroke-dasharray="3.4 2"/><path d="M925.2 210.6V218.6M921.2 214.6H929.2" stroke="#444" stroke-width="0.8"/></svg>
<div class="r" style="left:861px;top:232.3px;width:128.00px;height:14.60px;background:#d2d2d2;"></div>
<span class="t" style="left:946.60px;top:236.55px;font-size:6.7px;line-height:8.71px;color:#111;transform:scaleX(0.922);transform-origin:left center;">Novel</span>
<span class="t" style="left:946.60px;top:251.11px;font-size:6.7px;line-height:8.71px;color:#111;transform:scaleX(0.920);transform-origin:left center;">Charm</span>
<span class="t" style="left:946.60px;top:265.68px;font-size:6.7px;line-height:8.71px;color:#111;transform:scaleX(0.955);transform-origin:left center;">Antique</span>
<span class="t" style="left:946.60px;top:280.24px;font-size:6.7px;line-height:8.71px;color:#111;transform:scaleX(0.829);transform-origin:left center;">Fresh</span>
<span class="t" style="left:946.60px;top:294.81px;font-size:6.7px;line-height:8.71px;color:#111;transform:scaleX(0.879);transform-origin:left center;">Live</span>
<span class="t" style="left:946.60px;top:309.37px;font-size:6.7px;line-height:8.71px;color:#111;transform:scaleX(0.883);transform-origin:left center;">Crystal</span>
<span class="t" style="left:946.60px;top:323.94px;font-size:6.7px;line-height:8.71px;color:#111;transform:scaleX(0.884);transform-origin:left center;">Broad</span>
<span class="t" style="left:946.60px;top:338.50px;font-size:6.7px;line-height:8.71px;color:#111;transform:scaleX(0.925);transform-origin:left center;">Sprinkle</span>
<span class="t" style="left:946.60px;top:353.06px;font-size:6.7px;line-height:8.71px;color:#111;transform:scaleX(0.902);transform-origin:left center;">Tranquil</span>
<span class="t" style="left:946.60px;top:367.63px;font-size:6.7px;line-height:8.71px;color:#111;transform:scaleX(0.946);transform-origin:left center;">Opulent</span>
<span class="t" style="left:946.60px;top:382.19px;font-size:6.7px;line-height:8.71px;color:#111;transform:scaleX(0.910);transform-origin:left center;">Placid</span>
<span class="t" style="left:946.60px;top:396.76px;font-size:6.7px;line-height:8.71px;color:#111;transform:scaleX(0.926);transform-origin:left center;">Natural</span>
<span class="t" style="left:946.60px;top:411.32px;font-size:6.7px;line-height:8.71px;color:#111;transform:scaleX(0.880);transform-origin:left center;">Dream</span>
<span class="t" style="left:946.60px;top:425.89px;font-size:6.7px;line-height:8.71px;color:#111;transform:scaleX(0.877);transform-origin:left center;">Garden</span>
<span class="t" style="left:946.60px;top:440.45px;font-size:6.7px;line-height:8.71px;color:#111;transform:scaleX(0.898);transform-origin:left center;">Candy</span>
<span class="t" style="left:946.60px;top:455.02px;font-size:6.7px;line-height:8.71px;color:#111;transform:scaleX(0.838);transform-origin:left center;">Bloss...</span>
<span class="t" style="left:946.60px;top:469.58px;font-size:6.7px;line-height:8.71px;color:#111;transform:scaleX(0.880);transform-origin:left center;">Elegant</span>
<span class="t" style="left:946.60px;top:484.15px;font-size:6.7px;line-height:8.71px;color:#111;transform:scaleX(0.899);transform-origin:left center;">BPMN</span>
<span class="t" style="left:946.60px;top:498.71px;font-size:6.7px;line-height:8.71px;color:#111;transform:scaleX(0.873);transform-origin:left center;">Jolly</span>
<span class="t" style="left:946.60px;top:513.28px;font-size:6.7px;line-height:8.71px;color:#111;transform:scaleX(0.921);transform-origin:left center;">Town</span>
<svg class="r" style="left:0px;top:0px;" width="1000" height="541" viewBox="0 0 1000 541"><rect x="861.00" y="235.50" width="7.9" height="8.2" fill="#4fd1c5"/><rect x="869.35" y="235.50" width="7.9" height="8.2" fill="#4a7ff7"/><rect x="877.70" y="235.50" width="7.9" height="8.2" fill="#3d5fc4"/><rect x="886.05" y="235.50" width="7.9" height="8.2" fill="#f77f7f"/><rect x="894.40" y="235.50" width="7.9" height="8.2" fill="#ffc857"/><rect x="902.75" y="235.50" width="7.9" height="8.2" fill="#8db8fa"/><rect x="911.10" y="235.50" width="7.9" height="8.2" fill="#7e97f7"/><rect x="919.45" y="235.50" width="7.9" height="8.2" fill="#ff9f1c"/><rect x="927.80" y="235.50" width="7.9" height="8.2" fill="#f76c6c"/><rect x="936.15" y="235.50" width="7.9" height="8.2" fill="#1a3a9c"/><rect x="861.00" y="250.06" width="7.9" height="8.2" fill="#f04545"/><rect x="869.35" y="250.06" width="7.9" height="8.2" fill="#3f8bef"/><rect x="877.70" y="250.06" width="7.9" height="8.2" fill="#ffc11e"/><rect x="886.05" y="250.06" width="7.9" height="8.2" fill="#2ea05a"/><rect x="894.40" y="250.06" width="7.9" height="8.2" fill="#4a4ae0"/><rect x="902.75" y="250.06" width="7.9" height="8.2" fill="#e8212b"/><rect x="911.10" y="250.06" width="7.9" height="8.2" fill="#6e4ae8"/><rect x="919.45" y="250.06" width="7.9" height="8.2" fill="#e021a0"/><rect x="927.80" y="250.06" width="7.9" height="8.2" fill="#1eb0f5"/><rect x="936.15" y="250.06" width="7.9" height="8.2" fill="#ff7a0f"/><rect x="861.00" y="264.63" width="7.9" height="8.2" fill="#2e8b4e"/><rect x="869.35" y="264.63" width="7.9" height="8.2" fill="#f7c843"/><rect x="877.70" y="264.63" width="7.9" height="8.2" fill="#f79646"/><rect x="886.05" y="264.63" width="7.9" height="8.2" fill="#f0555a"/><rect x="894.40" y="264.63" width="7.9" height="8.2" fill="#2f80ed"/><rect x="902.75" y="264.63" width="7.9" height="8.2" fill="#9b51e0"/><rect x="911.10" y="264.63" width="7.9" height="8.2" fill="#33a352"/><rect x="919.45" y="264.63" width="7.9" height="8.2" fill="#2d9cdb"/><rect x="927.80" y="264.63" width="7.9" height="8.2" fill="#c05ae8"/><rect x="936.15" y="264.63" width="7.9" height="8.2" fill="#1fd5de"/><rect x="861.00" y="279.19" width="7.9" height="8.2" fill="#ffbc1f"/><rect x="869.35" y="279.19" width="7.9" height="8.2" fill="#7db89b"/><rect x="877.70" y="279.19" width="7.9" height="8.2" fill="#7a8bfa"/><rect x="886.05" y="279.19" width="7.9" height="8.2" fill="#be82fa"/><rect x="894.40" y="279.19" width="7.9" height="8.2" fill="#8bc21f"/><rect x="902.75" y="279.19" width="7.9" height="8.2" fill="#fa8c7d"/><rect x="911.10" y="279.19" width="7.9" height="8.2" fill="#fa5a9b"/><rect x="919.45" y="279.19" width="7.9" height="8.2" fill="#ff7a0a"/><rect x="927.80" y="279.19" width="7.9" height="8.2" fill="#fa8cfa"/><rect x="936.15" y="279.19" width="7.9" height="8.2" fill="#8bb59e"/><rect x="861.00" y="293.76" width="7.9" height="8.2" fill="#d455b8"/><rect x="869.35" y="293.76" width="7.9" height="8.2" fill="#3fbdd8"/><rect x="877.70" y="293.76" width="7.9" height="8.2" fill="#f55a4e"/><rect x="886.05" y="293.76" width="7.9" height="8.2" fill="#3dae85"/><rect x="894.40" y="293.76" width="7.9" height="8.2" fill="#ffc050"/><rect x="902.75" y="293.76" width="7.9" height="8.2" fill="#ee4458"/><rect x="911.10" y="293.76" width="7.9" height="8.2" fill="#2e4fa8"/><rect x="919.45" y="293.76" width="7.9" height="8.2" fill="#fa8246"/><rect x="927.80" y="293.76" width="7.9" height="8.2" fill="#8a6af0"/><rect x="936.15" y="293.76" width="7.9" height="8.2" fill="#3db08b"/><rect x="861.00" y="308.32" width="7.9" height="8.2" fill="#1a2a5e"/><rect x="869.35" y="308.32" width="7.9" height="8.2" fill="#5585f5"/><rect x="877.70" y="308.32" width="7.9" height="8.2" fill="#3dae8b"/><rect x="886.05" y="308.32" width="7.9" height="8.2" fill="#3fbfc0"/><rect x="894.40" y="308.32" width="7.9" height="8.2" fill="#fa5f5a"/><rect x="902.75" y="308.32" width="7.9" height="8.2" fill="#f7c840"/><rect x="911.10" y="308.32" width="7.9" height="8.2" fill="#fa8a46"/><rect x="919.45" y="308.32" width="7.9" height="8.2" fill="#3fc050"/><rect x="927.80" y="308.32" width="7.9" height="8.2" fill="#ee65b8"/><rect x="936.15" y="308.32" width="7.9" height="8.2" fill="#fa8650"/><rect x="861.00" y="322.89" width="7.9" height="8.2" fill="#3560c8"/><rect x="869.35" y="322.89" width="7.9" height="8.2" fill="#fa7060"/><rect x="877.70" y="322.89" width="7.9" height="8.2" fill="#3585f0"/><rect x="886.05" y="322.89" width="7.9" height="8.2" fill="#65d8c5"/><rect x="894.40" y="322.89" width="7.9" height="8.2" fill="#ffc850"/><rect x="902.75" y="322.89" width="7.9" height="8.2" fill="#ee4548"/><rect x="911.10" y="322.89" width="7.9" height="8.2" fill="#96c840"/><rect x="919.45" y="322.89" width="7.9" height="8.2" fill="#8b5ae8"/><rect x="927.80" y="322.89" width="7.9" height="8.2" fill="#4fc8f0"/><rect x="936.15" y="322.89" width="7.9" height="8.2" fill="#f55aa0"/><rect x="861.00" y="337.45" width="7.9" height="8.2" fill="#fa9650"/><rect x="869.35" y="337.45" width="7.9" height="8.2" fill="#f7c840"/><rect x="877.70" y="337.45" width="7.9" height="8.2" fill="#45d8e8"/><rect x="886.05" y="337.45" width="7.9" height="8.2" fill="#fa5a5a"/><rect x="894.40" y="337.45" width="7.9" height="8.2" fill="#a8d855"/><rect x="902.75" y="337.45" width="7.9" height="8.2" fill="#8b5ae8"/><rect x="911.10" y="337.45" width="7.9" height="8.2" fill="#45c8f0"/><rect x="919.45" y="337.45" width="7.9" height="8.2" fill="#f55aa8"/><rect x="927.80" y="337.45" width="7.9" height="8.2" fill="#4a70e0"/><rect x="936.15" y="337.45" width="7.9" height="8.2" fill="#45c845"/><rect x="861.00" y="352.02" width="7.9" height="8.2" fill="#4a9af7"/><rect x="869.35" y="352.02" width="7.9" height="8.2" fill="#8b5ae8"/><rect x="877.70" y="352.02" width="7.9" height="8.2" fill="#a8d855"/><rect x="886.05" y="352.02" width="7.9" height="8.2" fill="#33a352"/><rect x="894.40" y="352.02" width="7.9" height="8.2" fill="#65d8c8"/><rect x="902.75" y="352.02" width="7.9" height="8.2" fill="#3a4ae8"/><rect x="911.10" y="352.02" width="7.9" height="8.2" fill="#8a6af5"/><rect x="919.45" y="352.02" width="7.9" height="8.2" fill="#4ad8a8"/><rect x="927.80" y="352.02" width="7.9" height="8.2" fill="#3db08b"/><rect x="936.15" y="352.02" width="7.9" height="8.2" fill="#6ac050"/><rect x="861.00" y="366.58" width="7.9" height="8.2" fill="#fa6035"/><rect x="869.35" y="366.58" width="7.9" height="8.2" fill="#f79650"/><rect x="877.70" y="366.58" width="7.9" height="8.2" fill="#f7c840"/><rect x="886.05" y="366.58" width="7.9" height="8.2" fill="#1f5f3f"/><rect x="894.40" y="366.58" width="7.9" height="8.2" fill="#6abf45"/><rect x="902.75" y="366.58" width="7.9" height="8.2" fill="#7fcf50"/><rect x="911.10" y="366.58" width="7.9" height="8.2" fill="#e0e83a"/><rect x="919.45" y="366.58" width="7.9" height="8.2" fill="#3fa0b0"/><rect x="927.80" y="366.58" width="7.9" height="8.2" fill="#6abfa8"/><rect x="936.15" y="366.58" width="7.9" height="8.2" fill="#6ad8c8"/><rect x="861.00" y="381.15" width="7.9" height="8.2" fill="#7a4af0"/><rect x="869.35" y="381.15" width="7.9" height="8.2" fill="#a8d840"/><rect x="877.70" y="381.15" width="7.9" height="8.2" fill="#3dae8b"/><rect x="886.05" y="381.15" width="7.9" height="8.2" fill="#f7c840"/><rect x="894.40" y="381.15" width="7.9" height="8.2" fill="#f55aa0"/><rect x="902.75" y="381.15" width="7.9" height="8.2" fill="#5aa0f7"/><rect x="911.10" y="381.15" width="7.9" height="8.2" fill="#fa6a5a"/><rect x="919.45" y="381.15" width="7.9" height="8.2" fill="#4ad0c0"/><rect x="927.80" y="381.15" width="7.9" height="8.2" fill="#8a5ae8"/><rect x="936.15" y="381.15" width="7.9" height="8.2" fill="#45d8f0"/><rect x="861.00" y="395.71" width="7.9" height="8.2" fill="#5ab0f7"/><rect x="869.35" y="395.71" width="7.9" height="8.2" fill="#fa7a7a"/><rect x="877.70" y="395.71" width="7.9" height="8.2" fill="#9a9a9a"/><rect x="886.05" y="395.71" width="7.9" height="8.2" fill="#8bc21f"/><rect x="894.40" y="395.71" width="7.9" height="8.2" fill="#e0a0d0"/><rect x="902.75" y="395.71" width="7.9" height="8.2" fill="#9a7ae8"/><rect x="911.10" y="395.71" width="7.9" height="8.2" fill="#ffc850"/><rect x="919.45" y="395.71" width="7.9" height="8.2" fill="#9ab0c8"/><rect x="927.80" y="395.71" width="7.9" height="8.2" fill="#45b0c0"/><rect x="936.15" y="395.71" width="7.9" height="8.2" fill="#e07050"/><rect x="861.00" y="410.28" width="7.9" height="8.2" fill="#a88ad0"/><rect x="869.35" y="410.28" width="7.9" height="8.2" fill="#e05a8a"/><rect x="877.70" y="410.28" width="7.9" height="8.2" fill="#6aa8d8"/><rect x="886.05" y="410.28" width="7.9" height="8.2" fill="#a07878"/><rect x="894.40" y="410.28" width="7.9" height="8.2" fill="#5ab888"/><rect x="902.75" y="410.28" width="7.9" height="8.2" fill="#45b0c0"/><rect x="911.10" y="410.28" width="7.9" height="8.2" fill="#2e4fa8"/><rect x="919.45" y="410.28" width="7.9" height="8.2" fill="#8a7878"/><rect x="927.80" y="410.28" width="7.9" height="8.2" fill="#a8b0b8"/><rect x="936.15" y="410.28" width="7.9" height="8.2" fill="#4a6aa0"/><rect x="861.00" y="424.84" width="7.9" height="8.2" fill="#2e8b4e"/><rect x="869.35" y="424.84" width="7.9" height="8.2" fill="#ffbc1f"/><rect x="877.70" y="424.84" width="7.9" height="8.2" fill="#1a2a4e"/><rect x="886.05" y="424.84" width="7.9" height="8.2" fill="#f04545"/><rect x="894.40" y="424.84" width="7.9" height="8.2" fill="#3dae8b"/><rect x="902.75" y="424.84" width="7.9" height="8.2" fill="#2e8070"/><rect x="911.10" y="424.84" width="7.9" height="8.2" fill="#fa7a7a"/><rect x="919.45" y="424.84" width="7.9" height="8.2" fill="#a8b8a0"/><rect x="927.80" y="424.84" width="7.9" height="8.2" fill="#2e5f45"/><rect x="936.15" y="424.84" width="7.9" height="8.2" fill="#8a4a60"/><rect x="861.00" y="439.41" width="7.9" height="8.2" fill="#4abac8"/><rect x="869.35" y="439.41" width="7.9" height="8.2" fill="#e0a0d0"/><rect x="877.70" y="439.41" width="7.9" height="8.2" fill="#6ab8f7"/><rect x="886.05" y="439.41" width="7.9" height="8.2" fill="#e88a7a"/><rect x="894.40" y="439.41" width="7.9" height="8.2" fill="#7abf9a"/><rect x="902.75" y="439.41" width="7.9" height="8.2" fill="#ffc850"/><rect x="911.10" y="439.41" width="7.9" height="8.2" fill="#3fa8d0"/><rect x="919.45" y="439.41" width="7.9" height="8.2" fill="#f08ac0"/><rect x="927.80" y="439.41" width="7.9" height="8.2" fill="#a0b850"/><rect x="936.15" y="439.41" width="7.9" height="8.2" fill="#d8b898"/><rect x="861.00" y="453.97" width="7.9" height="8.2" fill="#3dae7a"/><rect x="869.35" y="453.97" width="7.9" height="8.2" fill="#4a80d8"/><rect x="877.70" y="453.97" width="7.9" height="8.2" fill="#909090"/><rect x="886.05" y="453.97" width="7.9" height="8.2" fill="#0fb0ff"/><rect x="894.40" y="453.97" width="7.9" height="8.2" fill="#ffb81f"/><rect x="902.75" y="453.97" width="7.9" height="8.2" fill="#7fcf50"/><rect x="911.10" y="453.97" width="7.9" height="8.2" fill="#fa8246"/><rect x="919.45" y="453.97" width="7.9" height="8.2" fill="#ee3a3a"/><rect x="927.80" y="453.97" width="7.9" height="8.2" fill="#3a5ae0"/><rect x="936.15" y="453.97" width="7.9" height="8.2" fill="#9a5ae8"/><rect x="861.00" y="468.54" width="7.9" height="8.2" fill="#ffc850"/><rect x="869.35" y="468.54" width="7.9" height="8.2" fill="#8bb030"/><rect x="877.70" y="468.54" width="7.9" height="8.2" fill="#3a5aa0"/><rect x="886.05" y="468.54" width="7.9" height="8.2" fill="#f07a20"/><rect x="894.40" y="468.54" width="7.9" height="8.2" fill="#4a70f0"/><rect x="902.75" y="468.54" width="7.9" height="8.2" fill="#33a352"/><rect x="911.10" y="468.54" width="7.9" height="8.2" fill="#7a9ae0"/><rect x="919.45" y="468.54" width="7.9" height="8.2" fill="#a8d020"/><rect x="927.80" y="468.54" width="7.9" height="8.2" fill="#fa7a45"/><rect x="936.15" y="468.54" width="7.9" height="8.2" fill="#45b8c8"/><rect x="861.00" y="483.10" width="7.9" height="8.2" fill="#a08a78"/><rect x="869.35" y="483.10" width="7.9" height="8.2" fill="#8ab08a"/><rect x="877.70" y="483.10" width="7.9" height="8.2" fill="#6a9ab0"/><rect x="886.05" y="483.10" width="7.9" height="8.2" fill="#5a88c8"/><rect x="894.40" y="483.10" width="7.9" height="8.2" fill="#e88a7a"/><rect x="902.75" y="483.10" width="7.9" height="8.2" fill="#fa9a45"/><rect x="911.10" y="483.10" width="7.9" height="8.2" fill="#4a5a80"/><rect x="919.45" y="483.10" width="7.9" height="8.2" fill="#a0b850"/><rect x="927.80" y="483.10" width="7.9" height="8.2" fill="#7a5a45"/><rect x="936.15" y="483.10" width="7.9" height="8.2" fill="#c8c8c8"/><rect x="861.00" y="497.67" width="7.9" height="8.2" fill="#4a9af7"/><rect x="869.35" y="497.67" width="7.9" height="8.2" fill="#1a2a8a"/><rect x="877.70" y="497.67" width="7.9" height="8.2" fill="#2eb0d8"/><rect x="886.05" y="497.67" width="7.9" height="8.2" fill="#f78a9a"/><rect x="894.40" y="497.67" width="7.9" height="8.2" fill="#2ec8b8"/><rect x="902.75" y="497.67" width="7.9" height="8.2" fill="#e05a8a"/><rect x="911.10" y="497.67" width="7.9" height="8.2" fill="#0f5ac8"/><rect x="919.45" y="497.67" width="7.9" height="8.2" fill="#ffa81f"/><rect x="927.80" y="497.67" width="7.9" height="8.2" fill="#4a80d8"/><rect x="936.15" y="497.67" width="7.9" height="8.2" fill="#2ea0e0"/><rect x="861.00" y="512.24" width="7.9" height="8.2" fill="#7a5a4a"/><rect x="869.35" y="512.24" width="7.9" height="8.2" fill="#e07a45"/><rect x="877.70" y="512.24" width="7.9" height="8.2" fill="#8aa8c8"/><rect x="886.05" y="512.24" width="7.9" height="8.2" fill="#5a88c8"/><rect x="894.40" y="512.24" width="7.9" height="8.2" fill="#e08aa8"/><rect x="902.75" y="512.24" width="7.9" height="8.2" fill="#6aa898"/><rect x="911.10" y="512.24" width="7.9" height="8.2" fill="#8a9a78"/><rect x="919.45" y="512.24" width="7.9" height="8.2" fill="#8a8a8a"/><rect x="927.80" y="512.24" width="7.9" height="8.2" fill="#d8d030"/><rect x="936.15" y="512.24" width="7.9" height="8.2" fill="#7a8aa8"/></svg>
<!-- p6_status -->
<div class="r" style="left:0px;top:523px;width:1000.00px;height:18.00px;background:#f5f5f5;"></div>
<svg class="r" style="left:0px;top:0px;" width="1000" height="541" viewBox="0 0 1000 541"><rect x="315.30" y="515.2" width="5.29" height="7.2" fill="#a93226"/><rect x="321.04" y="515.2" width="5.29" height="7.2" fill="#d0223c"/><rect x="326.78" y="515.2" width="5.29" height="7.2" fill="#ee4a5f"/><rect x="332.52" y="515.2" width="5.29" height="7.2" fill="#f2708a"/><rect x="338.26" y="515.2" width="5.29" height="7.2" fill="#f5a6b1"/><rect x="344.00" y="515.2" width="5.29" height="7.2" fill="#2a8c8c"/><rect x="349.74" y="515.2" width="5.29" height="7.2" fill="#38a4b8"/><rect x="355.48" y="515.2" width="5.29" height="7.2" fill="#3fb6e0"/><rect x="361.22" y="515.2" width="5.29" height="7.2" fill="#5fcdf5"/><rect x="366.96" y="515.2" width="5.29" height="7.2" fill="#a3e4f7"/><rect x="372.70" y="515.2" width="5.29" height="7.2" fill="#f44e3b"/><rect x="378.44" y="515.2" width="5.29" height="7.2" fill="#ff6d3b"/><rect x="384.18" y="515.2" width="5.29" height="7.2" fill="#ff9a28"/><rect x="389.92" y="515.2" width="5.29" height="7.2" fill="#ffc22d"/><rect x="395.66" y="515.2" width="5.29" height="7.2" fill="#ffd061"/><rect x="401.40" y="515.2" width="5.29" height="7.2" fill="#1a8b80"/><rect x="407.14" y="515.2" width="5.29" height="7.2" fill="#1aae9a"/><rect x="412.88" y="515.2" width="5.29" height="7.2" fill="#2cc3b0"/><rect x="418.62" y="515.2" width="5.29" height="7.2" fill="#5fd6c6"/><rect x="424.36" y="515.2" width="5.29" height="7.2" fill="#8fe3d6"/><rect x="430.10" y="515.2" width="5.29" height="7.2" fill="#9c3068"/><rect x="435.84" y="515.2" width="5.29" height="7.2" fill="#d26a96"/><rect x="441.58" y="515.2" width="5.29" height="7.2" fill="#d85fbe"/><rect x="447.32" y="515.2" width="5.29" height="7.2" fill="#ee8ebd"/><rect x="453.06" y="515.2" width="5.29" height="7.2" fill="#f5c6de"/><rect x="458.80" y="515.2" width="5.29" height="7.2" fill="#6b9a1e"/><rect x="464.54" y="515.2" width="5.29" height="7.2" fill="#7aa820"/><rect x="470.28" y="515.2" width="5.29" height="7.2" fill="#96c831"/><rect x="476.02" y="515.2" width="5.29" height="7.2" fill="#b5e048"/><rect x="481.76" y="515.2" width="5.29" height="7.2" fill="#d0e08f"/><rect x="487.50" y="515.2" width="5.29" height="7.2" fill="#1b3c9c"/><rect x="493.24" y="515.2" width="5.29" height="7.2" fill="#3c50e0"/><rect x="498.98" y="515.2" width="5.29" height="7.2" fill="#6b4ce6"/><rect x="504.72" y="515.2" width="5.29" height="7.2" fill="#8b6cf0"/><rect x="510.46" y="515.2" width="5.29" height="7.2" fill="#a98df2"/><rect x="516.20" y="515.2" width="5.29" height="7.2" fill="#ffb912"/><rect x="521.94" y="515.2" width="5.29" height="7.2" fill="#fcdb2f"/><rect x="527.68" y="515.2" width="5.29" height="7.2" fill="#fcdb2f"/><rect x="533.42" y="515.2" width="5.29" height="7.2" fill="#fbea4b"/><rect x="539.16" y="515.2" width="5.29" height="7.2" fill="#f8f27c"/><rect x="544.90" y="515.2" width="5.29" height="7.2" fill="#9b51e0"/><rect x="550.64" y="515.2" width="5.29" height="7.2" fill="#c869f0"/><rect x="556.38" y="515.2" width="5.29" height="7.2" fill="#c36aeb"/><rect x="562.12" y="515.2" width="5.29" height="7.2" fill="#c78cf5"/><rect x="567.86" y="515.2" width="5.29" height="7.2" fill="#ddaef8"/><rect x="573.60" y="515.2" width="5.29" height="7.2" fill="#2e7d4f"/><rect x="579.34" y="515.2" width="5.29" height="7.2" fill="#33a55a"/><rect x="585.08" y="515.2" width="5.29" height="7.2" fill="#5daf7a"/><rect x="590.82" y="515.2" width="5.29" height="7.2" fill="#66bb88"/><rect x="596.56" y="515.2" width="5.29" height="7.2" fill="#96d3b0"/><rect x="602.30" y="515.2" width="5.29" height="7.2" fill="#ee3333"/><rect x="608.04" y="515.2" width="5.29" height="7.2" fill="#f04a45"/><rect x="613.78" y="515.2" width="5.29" height="7.2" fill="#f55d5d"/><rect x="619.52" y="515.2" width="5.29" height="7.2" fill="#fa8080"/><rect x="625.26" y="515.2" width="5.29" height="7.2" fill="#fc9c95"/><rect x="631.00" y="515.2" width="5.29" height="7.2" fill="#1c3f9b"/><rect x="636.74" y="515.2" width="5.29" height="7.2" fill="#2c6ad0"/><rect x="642.48" y="515.2" width="5.29" height="7.2" fill="#3d78e8"/><rect x="648.22" y="515.2" width="5.29" height="7.2" fill="#5c9cf5"/><rect x="653.96" y="515.2" width="5.29" height="7.2" fill="#8ab6f9"/><rect x="659.70" y="515.2" width="5.29" height="7.2" fill="#7b3f1e"/><rect x="665.44" y="515.2" width="5.29" height="7.2" fill="#a9371f"/><rect x="671.18" y="515.2" width="5.29" height="7.2" fill="#b73a25"/><rect x="676.92" y="515.2" width="5.29" height="7.2" fill="#e27852"/><rect x="682.66" y="515.2" width="5.29" height="7.2" fill="#e58462"/><rect x="688.40" y="515.2" width="5.29" height="7.2" fill="#1a7fe8"/><rect x="694.14" y="515.2" width="5.29" height="7.2" fill="#2e9af8"/><rect x="699.88" y="515.2" width="5.29" height="7.2" fill="#4fa8f8"/><rect x="705.62" y="515.2" width="5.29" height="7.2" fill="#3fcfef"/><rect x="711.36" y="515.2" width="5.29" height="7.2" fill="#6adbf5"/><rect x="717.10" y="515.2" width="5.29" height="7.2" fill="#7d4a2a"/><rect x="722.84" y="515.2" width="5.29" height="7.2" fill="#a56a48"/><rect x="728.58" y="515.2" width="5.29" height="7.2" fill="#b07a58"/><rect x="734.32" y="515.2" width="5.29" height="7.2" fill="#d97757"/><rect x="740.06" y="515.2" width="5.29" height="7.2" fill="#f59a5a"/><rect x="745.80" y="515.2" width="5.29" height="7.2" fill="#8e8080"/><rect x="751.54" y="515.2" width="5.29" height="7.2" fill="#b5a898"/><rect x="757.28" y="515.2" width="5.29" height="7.2" fill="#d0ccc0"/><rect x="763.02" y="515.2" width="5.29" height="7.2" fill="#ede8d8"/><rect x="768.76" y="515.2" width="5.29" height="7.2" fill="#f5f0e0"/><rect x="774.50" y="515.2" width="5.29" height="7.2" fill="#111111"/><rect x="780.24" y="515.2" width="5.29" height="7.2" fill="#333333"/><rect x="785.98" y="515.2" width="5.29" height="7.2" fill="#444444"/><rect x="791.72" y="515.2" width="5.29" height="7.2" fill="#666666"/><rect x="797.46" y="515.2" width="5.29" height="7.2" fill="#888888"/><rect x="803.20" y="515.2" width="5.29" height="7.2" fill="#b0b0b0"/><rect x="808.94" y="515.2" width="5.29" height="7.2" fill="#c8c8c8"/><rect x="814.68" y="515.2" width="5.29" height="7.2" fill="#dddddd"/><rect x="820.42" y="515.2" width="5.29" height="7.2" fill="#eaeaea"/><rect x="826.16" y="515.2" width="5.29" height="7.2" fill="#f5f5f5"/><rect x="831.90" y="515.2" width="5.29" height="7.2" fill="#ffffff"/></svg>
<svg class="r" style="left:303.50px;top:515.10px;" width="7.4" height="7.4" viewBox="0 0 10 10" fill="none" stroke="#1c1c1c" stroke-width="1.0" stroke-linecap="round" stroke-linejoin="round"><path d="M4.4 1.6L7.8 5L4.8 8.2L1.6 5Z"/><path d="M1.8 5.2H7.8L4.8 8.2Z" fill="#333"/><path d="M4.4 1.6L3.4 0.6"/></svg>
<svg class="r" style="left:310.80px;top:518.60px" width="3.2" height="1.6" viewBox="0 0 4 2"><path d="M0 0H4L2 2Z" fill="#555"/></svg>
<svg class="r" style="left:6.60px;top:527.60px;" width="9.6" height="9.6" viewBox="0 0 10 10" fill="none" stroke="#1c1c1c" stroke-width="0.8" stroke-linecap="round" stroke-linejoin="round"><rect x="2.4" y="2.4" width="5.2" height="5.2"/><path d="M0.8 2.4V7.6M9.2 2.4V7.6"/></svg>
<div class="r" style="left:23.2px;top:526.6px;width:0.70px;height:12.00px;background:#dcdcdc;"></div>
<span class="t" style="left:28.80px;top:528.74px;font-size:6.4px;line-height:8.32px;color:#1c1c1c;transform:scaleX(0.901);transform-origin:left center;">Page-1</span>
<svg class="r" style="left:78.60px;top:530.60px" width="3.2" height="1.6" viewBox="0 0 4 2"><path d="M0 0H4L2 2Z" fill="#777"/></svg>
<div class="r" style="left:85.2px;top:526.6px;width:0.70px;height:12.00px;background:#dcdcdc;"></div>
<svg class="r" style="left:93.40px;top:528.80px;" width="6.4" height="6.4" viewBox="0 0 10 10" fill="none" stroke="#1c1c1c" stroke-width="1.2" stroke-linecap="round" stroke-linejoin="round"><path d="M5 1.6V8.4M1.6 5H8.4"/></svg>
<div class="r" style="left:108.2px;top:526.6px;width:0.70px;height:12.00px;background:#dcdcdc;"></div>
<span class="t" style="left:119.20px;top:528.74px;font-size:6.4px;line-height:8.32px;color:#1a7af0;transform:scaleX(0.953);transform-origin:left center;font-weight:bold;">Page-1</span>
<svg class="r" style="left:814.90px;top:527.70px;" width="9.4" height="9.4" viewBox="0 0 10 10" fill="none" stroke="#3a3a3a" stroke-width="1.1" stroke-linecap="round" stroke-linejoin="round"><path d="M1.2 3.2V1.2H3.2M6.8 1.2H8.8V3.2M8.8 6.8V8.8H6.8M3.2 8.8H1.2V6.8"/><rect x="3.6" y="3.4" width="2.8" height="3.2" fill="#666" stroke="none"/></svg>
<span class="t" style="left:828.20px;top:528.74px;font-size:6.4px;line-height:8.32px;color:#1c1c1c;transform:scaleX(0.918);transform-origin:left center;">Focus</span>
<svg class="r" style="left:852.10px;top:527.50px;" width="9.8" height="9.8" viewBox="0 0 10 10" fill="none" stroke="#3a3a3a" stroke-width="1.0" stroke-linecap="round" stroke-linejoin="round"><circle cx="5" cy="5" r="4"/><path d="M4 3.2L6.8 5L4 6.8Z"/></svg>
<div class="r" style="left:867.4px;top:531.9px;width:5.20px;height:1.10px;background:#3a3a3a;"></div>
<div class="r" style="left:876px;top:531.4px;width:42.60px;height:2.00px;background:#d6d6d6;border-radius:1px;"></div>
<div class="r" style="left:876px;top:531.4px;width:10.00px;height:2.00px;background:#adadad;border-radius:1px;"></div>
<div class="r" style="left:884.2px;top:529.3px;width:6.2px;height:6.2px;border-radius:50%;background:#fff;border:0.9px solid #666;box-sizing:border-box"></div>
<svg class="r" style="left:922.10px;top:529.50px;" width="5.8" height="5.8" viewBox="0 0 10 10" fill="none" stroke="#3a3a3a" stroke-width="1.7" stroke-linecap="round" stroke-linejoin="round"><path d="M5 1.4V8.6M1.4 5H8.6"/></svg>
<span class="t" style="left:934.80px;top:528.74px;font-size:6.4px;line-height:8.32px;color:#1c1c1c;transform:scaleX(0.892);transform-origin:left center;">100%</span>
<svg class="r" style="left:951.60px;top:531.80px" width="3.2" height="1.6" viewBox="0 0 4 2"><path d="M0 0H4L2 2Z" fill="#888"/></svg>
<svg class="r" style="left:963.90px;top:527.90px;" width="9" height="9" viewBox="0 0 10 10" fill="none" stroke="#1c1c1c" stroke-width="1.2" stroke-linecap="round" stroke-linejoin="round"><path d="M1.2 3.4V1.2H3.4M6.6 1.2H8.8V3.4M8.8 6.6V8.8H6.6M3.4 8.8H1.2V6.6"/></svg>
<svg class="r" style="left:976.30px;top:527.90px;" width="9" height="9" viewBox="0 0 10 10" fill="none" stroke="#1c1c1c" stroke-width="1.1" stroke-linecap="round" stroke-linejoin="round"><rect x="1" y="1" width="8" height="8" rx="0.6"/><path d="M2.8 5H7.2M3.8 4L2.8 5L3.8 6M6.2 4L7.2 5L6.2 6" stroke-width="0.7"/></svg>
<!-- p7_menu -->
<div class="r" style="left:0px;top:36.8px;width:310.00px;height:245.20px;background:#fff;"></div>
<div class="r" style="left:0px;top:36.8px;width:67.00px;height:245.20px;background:#0b74e8;"></div>
<svg class="r" style="left:14px;top:36.8px;overflow:hidden" width="18" height="9" viewBox="14 36.8 18 9"><circle cx="22.8" cy="36.6" r="7.6" fill="none" stroke="#fff" stroke-width="1.1"/><path d="M19.4 37H26.6M22.2 39.2L19.6 37.2" stroke="#fff" stroke-width="1.1" fill="none"/></svg>
<div class="r" style="left:0px;top:188px;width:67.00px;height:19.60px;background:#0a63cb;"></div>
<span class="t" style="left:15.20px;top:70.97px;font-size:6.05px;line-height:7.87px;color:#fff;transform:scaleX(0.892);transform-origin:left center;opacity:0.9;">New</span>
<span class="t" style="left:15.20px;top:89.06px;font-size:6.05px;line-height:7.87px;color:#fff;transform:scaleX(0.878);transform-origin:left center;opacity:0.9;">Open</span>
<span class="t" style="left:15.20px;top:106.77px;font-size:6.05px;line-height:7.87px;color:#fff;transform:scaleX(0.945);transform-origin:left center;opacity:0.9;">Import</span>
<span class="t" style="left:15.20px;top:124.36px;font-size:6.05px;line-height:7.87px;color:#fff;transform:scaleX(0.911);transform-origin:left center;opacity:0.9;">Cloud Documents</span>
<span class="t" style="left:15.20px;top:141.97px;font-size:6.05px;line-height:7.87px;color:#fff;transform:scaleX(0.878);transform-origin:left center;opacity:0.9;">Templates</span>
<span class="t" style="left:15.20px;top:159.87px;font-size:6.05px;line-height:7.87px;color:#fff;transform:scaleX(0.798);transform-origin:left center;opacity:0.9;">Save</span>
<span class="t" style="left:15.20px;top:177.56px;font-size:6.05px;line-height:7.87px;color:#fff;transform:scaleX(0.820);transform-origin:left center;opacity:0.9;">Save As</span>
<span class="t" style="left:15.20px;top:194.97px;font-size:6.05px;line-height:7.87px;color:#fff;transform:scaleX(0.892);transform-origin:left center;opacity:0.9;">Export &amp; Send</span>
<span class="t" style="left:15.20px;top:213.06px;font-size:6.05px;line-height:7.87px;color:#fff;transform:scaleX(0.900);transform-origin:left center;opacity:0.9;">Print</span>
<svg class="r" style="left:51.00px;top:70.20px;" width="6" height="6" viewBox="0 0 10 10" fill="none" stroke="#d4e5fb" stroke-width="1.8" stroke-linecap="round" stroke-linejoin="round"><path d="M5 1.2V8.8M1.2 5H8.8"/></svg>
<div class="r" style="left:44px;top:141.4px;width:14.20px;height:7.20px;background:#f2545b;border-radius:2.4px;"></div>
<span class="t" style="left:45.38px;top:142.12px;font-size:4.9px;line-height:6.37px;color:#fff;transform:scaleX(0.900);transform-origin:center center;font-weight:bold;">NEW</span>
<svg class="r" style="left:15px;top:230.6px" width="5.4" height="5.4" viewBox="0 0 6 6"><circle cx="3" cy="3" r="2.9" fill="#fff"/><path d="M1.6 3H4.4" stroke="#0b74e8" stroke-width="1"/></svg>
<span class="t" style="left:23.80px;top:230.66px;font-size:6.05px;line-height:7.87px;color:#fff;transform:scaleX(0.853);transform-origin:left center;opacity:0.9;">Exit</span>
<div class="r" style="left:67px;top:56.2px;width:243.00px;height:0.80px;background:#e8e8e8;"></div>
<div class="r" style="left:162.2px;top:57px;width:0.80px;height:225.00px;background:#e8e8e8;"></div>
<div class="r" style="left:67px;top:213.4px;width:95.20px;height:0.80px;background:#e8e8e8;"></div>
<span class="t" style="left:76.20px;top:41.62px;font-size:9.2px;line-height:11.96px;color:#1a1a1a;transform:scaleX(0.892);transform-origin:left center;font-weight:bold;">Export</span>
<span class="t" style="left:177.00px;top:41.82px;font-size:9.2px;line-height:11.96px;color:#1a1a1a;transform:scaleX(0.874);transform-origin:left center;font-weight:bold;">Export to Graphics</span>
<span class="t" style="left:76.00px;top:221.52px;font-size:9.2px;line-height:11.96px;color:#1a1a1a;transform:scaleX(0.827);transform-origin:left center;font-weight:bold;">Send</span>
<div class="r" style="left:73.4px;top:67.6px;width:84.60px;height:18.80px;background:#e6effc;"></div>
<div class="r" style="left:157.6px;top:72px;width:1.00px;height:10.40px;background:#5b8ff0;"></div>
<svg class="r" style="left:74.0px;top:71.20000000000002px" width="11.2" height="12.3" viewBox="0 0 10 11"><path d="M2.4 0.4H7.2L9.4 2.6V10.4H2.4Z" fill="#fff" stroke="#d4d4d4" stroke-width="0.5"/><path d="M7.2 0.4V2.6H9.4" fill="#f0f0f0" stroke="#d4d4d4" stroke-width="0.4"/><rect x="0.1" y="2.9" width="6.9" height="5.2" rx="0.6" fill="#1aaf8b"/></svg><span class="t" style="left:74.17px;top:75.08px;font-size:3.8px;line-height:4.94px;color:#fff;transform:scaleX(0.850);transform-origin:center center;font-weight:bold;opacity:0.85;">JPG</span>
<span class="t" style="left:90.60px;top:73.81px;font-size:6.3px;line-height:8.19px;color:#2a7cf0;transform:scaleX(0.825);transform-origin:left center;">Graphics</span>
<svg class="r" style="left:74.0px;top:89.30000000000001px" width="11.2" height="12.3" viewBox="0 0 10 11"><path d="M2.4 0.4H7.2L9.4 2.6V10.4H2.4Z" fill="#fff" stroke="#d4d4d4" stroke-width="0.5"/><path d="M7.2 0.4V2.6H9.4" fill="#f0f0f0" stroke="#d4d4d4" stroke-width="0.4"/><rect x="0.1" y="2.9" width="6.9" height="5.2" rx="0.6" fill="#f2484c"/></svg><span class="t" style="left:74.18px;top:93.18px;font-size:3.8px;line-height:4.94px;color:#fff;transform:scaleX(0.850);transform-origin:center center;font-weight:bold;opacity:0.85;">PDF</span>
<span class="t" style="left:90.60px;top:91.91px;font-size:6.3px;line-height:8.19px;color:#222;transform:scaleX(0.739);transform-origin:left center;">PDF, PS, EPS</span>
<svg class="r" style="left:74.0px;top:107.4px" width="11.2" height="12.3" viewBox="0 0 10 11"><path d="M2.4 0.4H7.2L9.4 2.6V10.4H2.4Z" fill="#fff" stroke="#d4d4d4" stroke-width="0.5"/><path d="M7.2 0.4V2.6H9.4" fill="#f0f0f0" stroke="#d4d4d4" stroke-width="0.4"/><rect x="0.1" y="2.9" width="6.9" height="5.2" rx="0.6" fill="#3a8ef0"/></svg><span class="t" style="left:76.18px;top:111.28px;font-size:3.8px;line-height:4.94px;color:#fff;transform:scaleX(0.850);transform-origin:center center;font-weight:bold;opacity:0.85;">W</span>
<span class="t" style="left:90.60px;top:110.00px;font-size:6.3px;line-height:8.19px;color:#222;transform:scaleX(0.893);transform-origin:left center;">Office</span>
<svg class="r" style="left:74.0px;top:125.80000000000001px" width="11.2" height="12.3" viewBox="0 0 10 11"><path d="M2.4 0.4H7.2L9.4 2.6V10.4H2.4Z" fill="#fff" stroke="#d4d4d4" stroke-width="0.5"/><path d="M7.2 0.4V2.6H9.4" fill="#f0f0f0" stroke="#d4d4d4" stroke-width="0.4"/><rect x="0.1" y="2.9" width="6.9" height="5.2" rx="0.6" fill="#1fa678"/></svg><span class="t" style="left:72.70px;top:129.68px;font-size:3.8px;line-height:4.94px;color:#fff;transform:scaleX(0.620);transform-origin:center center;font-weight:bold;opacity:0.85;">HTML</span>
<span class="t" style="left:90.60px;top:128.41px;font-size:6.3px;line-height:8.19px;color:#222;transform:scaleX(0.973);transform-origin:left center;">Html</span>
<svg class="r" style="left:74.0px;top:143.9px" width="11.2" height="12.3" viewBox="0 0 10 11"><path d="M2.4 0.4H7.2L9.4 2.6V10.4H2.4Z" fill="#fff" stroke="#d4d4d4" stroke-width="0.5"/><path d="M7.2 0.4V2.6H9.4" fill="#f0f0f0" stroke="#d4d4d4" stroke-width="0.4"/><rect x="0.1" y="2.9" width="6.9" height="5.2" rx="0.6" fill="#8a5ae6"/></svg><span class="t" style="left:73.96px;top:147.78px;font-size:3.8px;line-height:4.94px;color:#fff;transform:scaleX(0.850);transform-origin:center center;font-weight:bold;opacity:0.85;">SVG</span>
<span class="t" style="left:90.60px;top:146.50px;font-size:6.3px;line-height:8.19px;color:#222;transform:scaleX(0.707);transform-origin:left center;">SVG</span>
<svg class="r" style="left:74.0px;top:162.0px" width="11.2" height="12.3" viewBox="0 0 10 11"><path d="M2.4 0.4H7.2L9.4 2.6V10.4H2.4Z" fill="#fff" stroke="#d4d4d4" stroke-width="0.5"/><path d="M7.2 0.4V2.6H9.4" fill="#f0f0f0" stroke="#d4d4d4" stroke-width="0.4"/><rect x="0.1" y="2.9" width="6.9" height="5.2" rx="0.6" fill="#2b62c8"/></svg><span class="t" style="left:76.71px;top:165.88px;font-size:3.8px;line-height:4.94px;color:#fff;transform:scaleX(0.850);transform-origin:center center;font-weight:bold;opacity:0.85;">V</span>
<span class="t" style="left:90.60px;top:164.60px;font-size:6.3px;line-height:8.19px;color:#222;transform:scaleX(0.842);transform-origin:left center;">Visio</span>
<svg class="r" style="left:74.60px;top:246.80px;" width="10.4" height="10.4" viewBox="0 0 10 10" fill="none" stroke="#222" stroke-width="0.8" stroke-linecap="round" stroke-linejoin="round"><rect x="0.8" y="1.6" width="8" height="6.4" rx="0.6"/><path d="M0.8 2L4.8 5L8.8 2M6.4 8.4H9.8M8.6 7.2L9.8 8.4L8.6 9.6" /></svg>
<span class="t" style="left:90.60px;top:248.60px;font-size:6.3px;line-height:8.19px;color:#222;transform:scaleX(0.832);transform-origin:left center;">Send Email</span>
<span class="t" style="left:177.00px;top:71.53px;font-size:6.1px;line-height:7.93px;color:#2a2a2a;transform:scaleX(0.879);transform-origin:left center;">Save image files, such as jpg, jpeg, png, bmp, gif.</span>
<div class="r" style="left:177.4px;top:89.2px;width:50.20px;height:41.50px;background:#fff;border:0.7px solid #dcdcdc;box-sizing:border-box;"></div>
<svg class="r" style="left:196.60000000000002px;top:92.0px" width="11.2" height="12.3" viewBox="0 0 10 11"><path d="M2.4 0.4H7.2L9.4 2.6V10.4H2.4Z" fill="#fff" stroke="#d4d4d4" stroke-width="0.5"/><path d="M7.2 0.4V2.6H9.4" fill="#f0f0f0" stroke="#d4d4d4" stroke-width="0.4"/><rect x="0.1" y="2.9" width="6.9" height="5.2" rx="0.6" fill="#1aaf8b"/></svg><span class="t" style="left:196.77px;top:95.88px;font-size:3.8px;line-height:4.94px;color:#fff;transform:scaleX(0.850);transform-origin:center center;font-weight:bold;opacity:0.85;">JPG</span>
<span class="t" style="left:190.00px;top:111.03px;font-size:6.1px;line-height:7.93px;color:#555;transform:scaleX(0.840);transform-origin:center center;">Graphics</span>
<span class="t" style="left:180.20px;top:120.03px;font-size:6.1px;line-height:7.93px;color:#555;transform:scaleX(0.887);transform-origin:left center;">*.jpg,*.jpeg,*.png...</span>
<span class="t" style="left:177.00px;top:142.34px;font-size:6.1px;line-height:7.93px;color:#2a2a2a;transform:scaleX(0.897);transform-origin:left center;">Save to the graphics file to mutiple page tiff file.</span>
<div class="r" style="left:177.4px;top:160.2px;width:50.20px;height:41.00px;background:#fff;border:0.7px solid #dcdcdc;box-sizing:border-box;"></div>
<svg class="r" style="left:196.60000000000002px;top:162.8px" width="11.2" height="12.3" viewBox="0 0 10 11"><path d="M2.4 0.4H7.2L9.4 2.6V10.4H2.4Z" fill="#fff" stroke="#d4d4d4" stroke-width="0.5"/><path d="M7.2 0.4V2.6H9.4" fill="#f0f0f0" stroke="#d4d4d4" stroke-width="0.4"/><rect x="0.1" y="2.9" width="6.9" height="5.2" rx="0.6" fill="#3a96f0"/></svg><span class="t" style="left:196.57px;top:166.68px;font-size:3.8px;line-height:4.94px;color:#fff;transform:scaleX(0.620);transform-origin:center center;font-weight:bold;opacity:0.85;">TIFF</span>
<span class="t" style="left:197.83px;top:181.53px;font-size:6.1px;line-height:7.93px;color:#555;transform:scaleX(0.840);transform-origin:center center;">Tiff</span>
<span class="t" style="left:194.67px;top:189.94px;font-size:6.1px;line-height:7.93px;color:#555;transform:scaleX(0.840);transform-origin:center center;">(*.tiff)</span>
<!-- p8_annot -->
<svg class="r" style="left:0px;top:0px;" width="1000" height="541" viewBox="0 0 1000 541"><rect x="4.4" y="15.4" width="31.80" height="17.00" fill="none" stroke="#e9212c" stroke-width="1.15" rx="0.6"/><rect x="158.4" y="1.0" width="55.20" height="15.20" fill="none" stroke="#8e3a80" stroke-width="1.3" rx="1.0"/><rect x="881.4" y="11.6" width="74.00" height="22.00" fill="none" stroke="#ea1f2c" stroke-width="1.2" rx="0.6" opacity="0.82"/><rect x="73.2" y="66.6" width="84.50" height="113.50" fill="none" stroke="#e9212c" stroke-width="1.15" rx="0.3"/><rect x="0.6" y="188" width="66.90" height="20.00" fill="none" stroke="#a33a7c" stroke-width="1.2" rx="1.6"/><polygon points="75.47,12.17 47.69,19.05 48.00,15.93 40.20,23.30 50.78,25.12 48.79,22.69 75.73,13.03" fill="#ee1c25"/><polygon points="290.43,-0.90 223.96,4.36 224.32,1.92 215.60,7.20 225.19,10.67 224.35,8.34 290.57,0.50" fill="#ee1c25"/><polygon points="716.26,13.70 871.08,27.26 869.67,29.86 879.20,26.10 870.38,20.89 871.37,23.67 716.34,12.70" fill="#ee1c25"/><polygon points="6.62,138.72 40.21,180.63 37.22,181.58 47.00,185.90 44.41,175.53 42.97,178.32 7.38,138.08" fill="#ee1c25"/><polygon points="201.09,248.59 143.98,176.00 146.68,175.35 137.30,170.60 140.00,180.77 141.19,178.26 200.31,249.21" fill="#ee1c25"/></svg>
</body></html>
